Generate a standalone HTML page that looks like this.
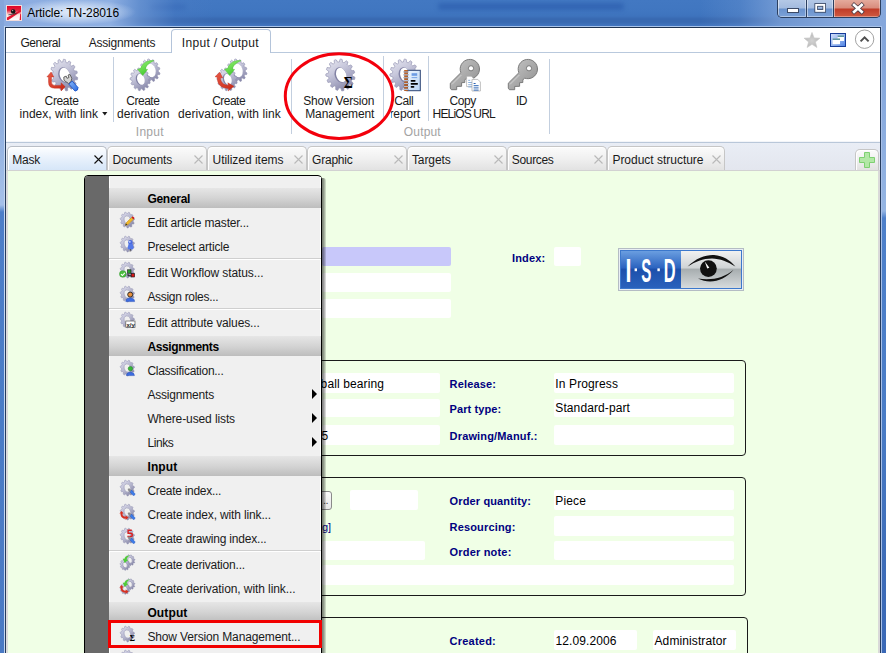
<!DOCTYPE html>
<html lang="en"><head><meta charset="utf-8"><title>Article: TN-28016</title>
<style>
html,body{margin:0;padding:0}
body{width:886px;height:653px;position:relative;overflow:hidden;background:#4a7cc4;font-family:"Liberation Sans",sans-serif;font-size:12px}
body *{position:absolute;box-sizing:border-box}
.t{white-space:nowrap;line-height:14px;height:14px}
.ic{overflow:visible}
#titlebar{left:0;top:0;width:886px;height:28px;background:linear-gradient(180deg,#4278c2 0,#4076c0 12px,#3e73bd 16px,#3869b1 19px,#3869b1 22px,#3c6fb8 24px,#4276c0 26px,#a9c4ea 26px,#a9c4ea 27px,#1f3350 27px)}
.blob{background:rgba(38,88,170,.55);filter:blur(2px);border-radius:3px}
#glow{left:0;top:0;width:260px;height:26px;background:radial-gradient(ellipse 62px 13px at 74px 12px,rgba(236,242,252,.9) 0,rgba(220,232,248,.7) 45%,rgba(190,210,240,0) 100%),linear-gradient(90deg,rgba(140,172,224,1) 0,rgba(146,178,228,.95) 110px,rgba(120,158,216,.6) 140px,rgba(80,125,198,.25) 175px,rgba(64,118,192,0) 215px)}
#glow2{left:700px;top:0;width:186px;height:26px;background:linear-gradient(90deg,rgba(134,168,220,0) 0,rgba(134,168,220,.2) 40px,rgba(134,168,220,.7) 80px,rgba(134,168,220,1) 150px)}
#lb{left:0;top:0;width:4px;height:653px;background:linear-gradient(180deg,#86a6da 0,#7ea2d8 60px,#a4bfe8 198px,#a4bfe8 205px,#4c7ec8 212px,#4a7ac4 100%)}
#lb1{left:4px;top:26px;width:1px;height:627px;background:#c4d6f0}
#lb2{left:5px;top:27px;width:1px;height:626px;background:#263c5e}
#rb{left:882px;top:0;width:4px;height:653px;background:linear-gradient(180deg,#86a8dc 0,#84a6dc 60px,#94b4e2 205px,#94b4e2 211px,#4e80ca 218px,#4a7cc6 420px,#3d6cb8 560px,#3a68b6 100%)}
#rb1{left:881px;top:26px;width:1px;height:627px;background:#a8c0e8}
#rb2{left:880px;top:27px;width:1px;height:626px;background:#263c5e}
#client{left:6px;top:28px;width:874px;height:625px;background:#fff}
.tabline{left:6px;top:52px;width:873px;height:1px;background:#b9c9dd}
#acttab{left:171px;top:29px;width:100px;height:24px;border:1px solid #b4c4da;border-bottom:0;border-radius:4px 4px 0 0;background:#fff}
.vs{width:1px;background:#c3cfdf}
#ribline{left:6px;top:141px;width:874px;height:2px;background:linear-gradient(180deg,#f3f5f9 0,#f3f5f9 1px,#b9c7d9 1px)}
#strip{left:6px;top:143px;width:874px;height:28px;background:linear-gradient(180deg,#e9edf5,#e3e6ee)}
#stripline{left:6px;top:170px;width:874px;height:1px;background:#d2d2d2}
.dt{top:146px;height:24px;border:1px solid #c6c6c6;border-bottom:0;border-radius:5px 5px 0 0;background:linear-gradient(180deg,#fbfbfb 0,#f0f0f0 50%,#e2e2e2 100%);box-shadow:inset 1px 1px 0 #fff}
.dt.a{background:linear-gradient(180deg,#fdfeff 0,#eaf2fc 45%,#d6e6f8 100%);border-color:#b9bec6}
#content{left:8px;top:171px;width:870px;height:482px;background:#f0ffe6}
#cedge{left:878px;top:171px;width:2px;height:482px;background:#d9d9d9}
#cedge2{left:6px;top:171px;width:2px;height:482px;background:#dcdcdc}
.f{background:#fff;border-radius:2px}
.gb{border:1px solid #1a1a1a;border-radius:4px}
#menu{left:84px;top:175px;width:238px;height:500px;border:1px solid #000;border-radius:4px;background:#f0f0f0}
#mshadow{left:322px;top:178px;width:4px;height:480px;background:linear-gradient(90deg,rgba(0,0,0,.5) 0,rgba(0,0,0,.45) 1px,rgba(0,0,0,.36) 2px,rgba(0,0,0,.22) 3px,rgba(0,0,0,.1) 4px);border-radius:0 3px 0 0}
#mstrip{left:85px;top:176px;width:24px;height:480px;background:#696969;border-radius:3px 0 0 0}
#mwl{left:109px;top:177px;width:1px;height:480px;background:#fff}
#mwr{left:320px;top:177px;width:1px;height:480px;background:#fff}
.mh{left:109px;width:212px;height:20px;background:linear-gradient(180deg,#e6e6e6 0,#d4d4d4 50%,#bdbdbd 100%)}
.ms{left:109px;width:212px;height:2px;background:linear-gradient(180deg,#cfcfcf 0,#cfcfcf 1px,#fff 1px)}
.ma{left:312px;width:0;height:0;border-left:5.4px solid #000;border-top:5px solid transparent;border-bottom:5px solid transparent}
#redrect{left:108px;top:620px;width:214px;height:28px;border:3px solid #f10000}

</style></head>
<body>
<svg width="0" height="0" style="position:absolute"><defs>
<linearGradient id="gg" x1="0.3" y1="0" x2="0.5" y2="1"><stop offset="0" stop-color="#e0e0ec"/><stop offset="0.35" stop-color="#c8c8dc"/><stop offset="0.7" stop-color="#a6a6c2"/><stop offset="1" stop-color="#8686a8"/></linearGradient>
<linearGradient id="gs" x1="0.2" y1="0" x2="0.7" y2="1"><stop offset="0" stop-color="#dcdcec"/><stop offset="0.5" stop-color="#b8b8d0"/><stop offset="1" stop-color="#8484a4"/></linearGradient>
<linearGradient id="rd" x1="0" y1="0" x2="1" y2="1"><stop offset="0" stop-color="#e85a48"/><stop offset="1" stop-color="#c82814"/></linearGradient>
<linearGradient id="gr" x1="0" y1="0" x2="0.6" y2="1"><stop offset="0" stop-color="#9af07a"/><stop offset="1" stop-color="#3cc828"/></linearGradient>
<linearGradient id="ky" x1="0" y1="0" x2="1" y2="1"><stop offset="0" stop-color="#c8c8c8"/><stop offset="1" stop-color="#8e8e8e"/></linearGradient>
<linearGradient id="bl" x1="0" y1="0" x2="1" y2="1"><stop offset="0" stop-color="#8ab8f8"/><stop offset="1" stop-color="#2a6ae0"/></linearGradient>
<linearGradient id="pg" x1="0" y1="0" x2="1" y2="1"><stop offset="0" stop-color="#eef6ff"/><stop offset="1" stop-color="#b8d4f4"/></linearGradient>
</defs></svg>
<div id="titlebar"></div>
<div class="blob" style="left:438px;top:3px;width:186px;height:7px"></div><div class="blob" style="left:150px;top:4px;width:36px;height:6px;opacity:.6"></div>
<div id="glow"></div><div id="glow2"></div>
<div id="lb"></div><div id="lb1"></div><div id="lb2"></div>
<div id="rb"></div><div id="rb1"></div><div id="rb2"></div>
<!-- app icon -->
<svg class="ic" style="left:6px;top:5px" width="16" height="16" viewBox="0 0 16 16"><defs><linearGradient id="aig" x1="0" y1="0" x2="0" y2="1"><stop offset="0" stop-color="#e00428"/><stop offset="0.3" stop-color="#e41c38"/><stop offset="0.62" stop-color="#fbe4e0"/><stop offset="1" stop-color="#fff"/></linearGradient></defs>
<rect x="0" y="0" width="16" height="16" fill="#f2dcdc"/><rect x="1" y="1" width="14" height="14" fill="url(#aig)"/>
<path d="M1,15 L1,12.6 L13.6,5.6 L15,5.2 L15,6.4 L2.4,15Z" fill="#e4142e"/><path d="M14.2,9 L15,8.4 L15,15 L13.6,15Z" fill="#e4142e"/>
<path d="M2.4,9.8 Q6,9.6 10.6,8.4" stroke="#333" stroke-width="0.8" fill="none"/>
<circle cx="7.2" cy="6.5" r="2.3" fill="#161616"/><circle cx="6.7" cy="5.6" r="0.55" fill="#ddd"/></svg>
<!-- window buttons -->
<div id="wbtn" style="left:777px;top:0;width:104px;height:18px;border:1px solid #2b3f60;border-top:0;border-radius:0 0 5px 5px;overflow:hidden;background:#2b3f60">
 <div style="left:0;top:0;width:28px;height:17px;background:linear-gradient(180deg,#b4c8e6 0,#a3bbdf 8px,#6a92cc 9px,#7ca2d8 17px);box-shadow:inset 1px 0 0 rgba(255,255,255,.5),inset -1px -1px 0 rgba(255,255,255,.4)"></div>
 <div style="left:29px;top:0;width:26px;height:17px;background:linear-gradient(180deg,#b4c8e6 0,#a3bbdf 8px,#6a92cc 9px,#7ca2d8 17px);box-shadow:inset 1px 0 0 rgba(255,255,255,.5),inset -1px -1px 0 rgba(255,255,255,.4)"></div>
 <div style="left:56px;top:0;width:46px;height:17px;background:linear-gradient(180deg,#e4aa9c 0,#d88c7c 8px,#c03c28 9px,#d05a40 17px);box-shadow:inset 1px 0 0 rgba(255,255,255,.45),inset -1px -1px 0 rgba(255,255,255,.35)"></div>
</div>
<svg class="ic" style="left:777px;top:0" width="104" height="18" viewBox="0 0 104 18">
 <rect x="10.5" y="8.5" width="11" height="4" fill="#fff" stroke="#3c4a66" stroke-width="1"/>
 <rect x="39.2" y="4.9" width="8" height="6" fill="none" stroke="#3c4a66" stroke-width="3.6"/><rect x="39.2" y="4.9" width="8" height="6" fill="none" stroke="#fff" stroke-width="1.9"/>
 <path d="M77.1,5 L84.7,11.8 M84.7,5 L77.1,11.8" stroke="#4a3a44" stroke-width="4.3" stroke-linecap="square"/><path d="M77.1,5 L84.7,11.8 M84.7,5 L77.1,11.8" stroke="#fff" stroke-width="2.7" stroke-linecap="square"/>
</svg>
<div id="client"></div>
<div id="acttab"></div>
<div class="tabline" style="width:165px"></div>
<div class="tabline" style="left:271px;width:609px"></div>
<!-- top-right ribbon icons -->
<svg class="ic" style="left:803px;top:31px" width="18" height="18" viewBox="0 0 18 18"><defs><radialGradient id="stg" cx="0.5" cy="0.55" r="0.6"><stop offset="0" stop-color="#d2d2d2"/><stop offset="1" stop-color="#b4b4b4"/></radialGradient></defs><path d="M9,1.4 L11.1,6.9 L16.9,7.2 L12.4,10.9 L13.9,16.5 L9,13.3 L4.1,16.5 L5.6,10.9 L1.1,7.2 L6.9,6.9 Z" fill="url(#stg)" stroke="#c6c6c6" stroke-width="0.6" stroke-linejoin="round"/></svg>
<svg class="ic" style="left:830px;top:33px" width="16" height="14" viewBox="0 0 16 14"><defs><linearGradient id="wg" x1="0" y1="0" x2="1" y2="1"><stop offset="0" stop-color="#d4e0fa"/><stop offset="0.5" stop-color="#9ab8f0"/><stop offset="1" stop-color="#4a80e4"/></linearGradient></defs><rect x="0.5" y="0.5" width="15" height="13" fill="url(#wg)" stroke="#163c98" stroke-width="1"/><rect x="7.6" y="2.6" width="6.4" height="5.4" fill="#fff"/><rect x="7.6" y="2.6" width="6.4" height="1.1" fill="#1c6c78"/><rect x="2.6" y="5.6" width="7.4" height="5.6" fill="#fff"/><rect x="2.6" y="5.6" width="7.4" height="1.1" fill="#1c6c78"/></svg>
<svg class="ic" style="left:854px;top:29px" width="21" height="21" viewBox="0 0 21 21"><circle cx="10.6" cy="10.2" r="9.2" fill="#fff" stroke="#8a8a8a" stroke-width="0.8"/><path d="M6.6,12.4 L10.6,8.4 L14.6,12.4" stroke="#4e4e4e" stroke-width="2" fill="none"/></svg>
<!-- ribbon separators -->
<div class="vs" style="left:113px;top:57px;height:65px"></div>
<div class="vs" style="left:291px;top:59px;height:75px"></div>
<div class="vs" style="left:383px;top:56px;height:65px"></div>
<div class="vs" style="left:428px;top:56px;height:65px"></div>
<div class="vs" style="left:549px;top:59px;height:75px"></div>
<svg class="ic" style="left:46px;top:59px" width="34" height="34" viewBox="0 0 34 34"><g transform="translate(18.1,16) rotate(-18) scale(0.83,1.0)"><path d="M15.8,0.0 L16.0,0.5 L16.0,0.9 L15.9,1.4 L15.9,1.8 L15.8,2.3 L14.9,2.6 L13.5,2.7 L12.9,3.0 L12.8,3.4 L12.7,3.7 L12.6,4.1 L12.4,4.4 L12.7,5.0 L13.8,5.8 L14.6,6.6 L14.4,7.1 L14.2,7.5 L13.9,7.9 L13.7,8.3 L13.4,8.6 L12.1,8.3 L10.8,7.9 L10.5,8.1 L10.2,8.4 L10.0,8.6 L9.7,8.9 L9.5,9.2 L9.8,10.1 L10.4,11.3 L10.5,12.1 L10.1,12.4 L9.8,12.7 L9.4,12.9 L9.0,13.2 L8.4,13.1 L7.4,12.2 L6.5,11.5 L6.2,11.7 L5.8,11.8 L5.5,12.0 L5.1,12.2 L4.8,12.3 L4.9,13.7 L4.9,15.0 L4.5,15.4 L4.1,15.5 L3.6,15.6 L3.2,15.7 L2.7,15.8 L2.2,15.0 L1.6,13.7 L1.1,13.2 L0.8,13.2 L0.4,13.2 L0.0,13.2 L-0.4,13.2 L-0.8,13.6 L-1.3,14.9 L-1.8,15.9 L-2.3,15.8 L-2.7,15.8 L-3.2,15.7 L-3.6,15.6 L-4.1,15.4 L-4.1,14.1 L-4.1,12.7 L-4.4,12.4 L-4.8,12.3 L-5.1,12.2 L-5.5,12.0 L-5.8,11.8 L-6.6,12.4 L-7.6,13.4 L-8.3,13.7 L-8.7,13.5 L-9.0,13.2 L-9.4,12.9 L-9.8,12.7 L-9.8,12.0 L-9.3,10.8 L-8.9,9.7 L-9.2,9.5 L-9.5,9.2 L-9.7,8.9 L-10.0,8.6 L-10.3,8.4 L-11.5,8.9 L-12.8,9.3 L-13.2,9.0 L-13.5,8.7 L-13.7,8.3 L-13.9,7.9 L-14.2,7.5 L-13.6,6.7 L-12.6,5.7 L-12.2,5.1 L-12.3,4.8 L-12.4,4.4 L-12.6,4.1 L-12.7,3.7 L-13.2,3.5 L-14.6,3.4 L-15.7,3.2 L-15.8,2.7 L-15.8,2.3 L-15.9,1.8 L-15.9,1.4 L-15.9,0.9 L-14.7,0.4 L-13.4,0.0 L-13.2,-0.4 L-13.2,-0.8 L-13.2,-1.1 L-13.1,-1.5 L-13.1,-1.9 L-13.9,-2.4 L-15.1,-3.1 L-15.6,-3.6 L-15.5,-4.1 L-15.4,-4.5 L-15.2,-4.9 L-15.1,-5.4 L-14.5,-5.6 L-13.1,-5.5 L-12.0,-5.5 L-11.8,-5.8 L-11.7,-6.2 L-11.5,-6.5 L-11.3,-6.8 L-11.1,-7.2 L-12.0,-8.2 L-12.8,-9.3 L-12.7,-9.8 L-12.4,-10.1 L-12.1,-10.5 L-11.8,-10.8 L-11.5,-11.2 L-10.5,-10.8 L-9.3,-10.2 L-8.6,-10.0 L-8.4,-10.2 L-8.1,-10.5 L-7.8,-10.7 L-7.5,-10.9 L-7.4,-11.5 L-7.7,-12.8 L-7.9,-13.9 L-7.5,-14.2 L-7.1,-14.4 L-6.6,-14.6 L-6.2,-14.7 L-5.8,-14.9 L-4.9,-13.8 L-4.1,-12.7 L-3.7,-12.7 L-3.4,-12.8 L-3.0,-12.9 L-2.6,-12.9 L-2.3,-13.0 L-2.0,-13.9 L-1.8,-15.3 L-1.4,-15.9 L-0.9,-16.0 L-0.5,-16.0 L-0.0,-16.0 L0.5,-16.0 L0.9,-15.5 L1.2,-14.2 L1.5,-13.1 L1.9,-13.1 L2.3,-13.0 L2.6,-12.9 L3.0,-12.9 L3.4,-12.8 L4.1,-13.9 L4.9,-15.0 L5.4,-15.1 L5.8,-14.9 L6.2,-14.7 L6.6,-14.6 L7.1,-14.4 L7.1,-13.4 L6.8,-12.0 L6.8,-11.3 L7.1,-11.1 L7.5,-10.9 L7.8,-10.7 L8.1,-10.5 L8.6,-10.6 L9.8,-11.3 L10.8,-11.8 L11.2,-11.5 L11.5,-11.2 L11.8,-10.8 L12.1,-10.5 L12.4,-10.1 L11.6,-9.0 L10.8,-7.9 L10.9,-7.5 L11.1,-7.1 L11.3,-6.8 L11.5,-6.5 L11.7,-6.2 L12.6,-6.2 L14.0,-6.4 L14.7,-6.2 L14.9,-5.8 L15.1,-5.4 L15.2,-4.9 L15.4,-4.5 L15.0,-4.0 L13.9,-3.2 L12.9,-2.6 L13.0,-2.3 L13.1,-1.9 L13.1,-1.5 L13.2,-1.1 L13.2,-0.8 L14.5,-0.4Z" fill="url(#gg)" stroke="#9494b2" stroke-width="0.7"/><ellipse cx="0" cy="0" rx="6.87" ry="7.8" fill="#8282a4"/><ellipse cx="0.9" cy="0.2" rx="6.07" ry="7.3" fill="#fff"/></g><path d="M5.1,13 L0.9,17.9 L2.5,17.9 L2.5,23 Q2.5,29.2 8.6,29.2 L15.1,29.2 L15.1,32 L19.2,27.7 L15.1,23.8 L15.1,26.4 L9,26.4 Q5.5,26.4 5.5,23 L5.5,17.9 L7.8,17.9 Z" fill="url(#rd)" stroke="#c0281a" stroke-width="0.4"/><g transform="translate(0.4,0.9)"><path d="M17.6,20.5 L17.4,17.2 L19.8,16.2 L20.6,18.4 L22.6,17.6 L21.6,15.2 L23.6,14.6 L25.4,18.4 L24.6,21.6 L22.2,23.6 Z" fill="#d4d4d4" stroke="#555" stroke-width="0.9"/><path d="M22.4,24.2 L25.8,21.2 L31.6,27.6 Q32,30.8 28.6,31.2 Z" fill="url(#bl)" stroke="#1c56c8" stroke-width="0.9"/></g></svg><svg class="ic" style="left:129px;top:58px" width="34" height="34" viewBox="0 0 34 34"><g transform="translate(21,12.4) rotate(-18) scale(0.86,1)"><path d="M11.2,0.0 L11.5,0.5 L11.5,0.9 L11.4,1.4 L11.4,1.8 L10.6,2.1 L9.7,2.3 L9.1,2.6 L9.0,2.9 L8.9,3.3 L8.8,3.6 L9.1,4.2 L9.7,5.0 L10.0,5.6 L9.8,6.0 L9.6,6.4 L9.3,6.8 L8.7,6.9 L7.8,6.6 L7.0,6.4 L6.7,6.7 L6.4,7.0 L6.2,7.2 L6.0,7.7 L6.3,8.6 L6.4,9.6 L6.0,9.8 L5.6,10.0 L5.2,10.2 L4.8,10.3 L4.0,9.7 L3.3,9.0 L2.9,9.0 L2.6,9.1 L2.2,9.2 L1.9,9.3 L1.6,10.2 L1.3,11.2 L0.9,11.5 L0.5,11.5 L0.0,11.5 L-0.5,11.5 L-0.8,10.7 L-1.2,9.8 L-1.5,9.4 L-1.9,9.3 L-2.2,9.2 L-2.6,9.1 L-3.1,9.6 L-3.8,10.3 L-4.4,10.6 L-4.8,10.4 L-5.2,10.2 L-5.6,10.0 L-5.8,9.4 L-5.6,8.4 L-5.6,7.7 L-5.9,7.5 L-6.2,7.2 L-6.4,7.0 L-6.9,6.9 L-7.9,7.3 L-8.7,7.5 L-9.0,7.1 L-9.3,6.8 L-9.6,6.4 L-9.6,5.9 L-9.1,5.1 L-8.5,4.3 L-8.6,4.0 L-8.8,3.6 L-8.9,3.3 L-9.1,3.0 L-10.1,2.8 L-11.0,2.6 L-11.3,2.2 L-11.4,1.8 L-11.4,1.4 L-11.5,0.9 L-10.7,0.4 L-9.8,0.0 L-9.5,-0.4 L-9.5,-0.7 L-9.4,-1.1 L-9.4,-1.5 L-10.0,-2.0 L-10.8,-2.6 L-11.1,-3.1 L-10.9,-3.6 L-10.8,-4.0 L-10.6,-4.4 L-10.0,-4.6 L-9.0,-4.6 L-8.3,-4.6 L-8.1,-5.0 L-7.9,-5.3 L-7.7,-5.6 L-7.8,-6.1 L-8.2,-7.0 L-8.4,-7.8 L-8.1,-8.1 L-7.8,-8.4 L-7.5,-8.7 L-7.0,-8.8 L-6.1,-8.4 L-5.3,-7.9 L-5.0,-8.1 L-4.6,-8.3 L-4.3,-8.5 L-4.0,-8.7 L-4.0,-9.7 L-3.9,-10.7 L-3.6,-10.9 L-3.1,-11.1 L-2.7,-11.2 L-2.2,-11.3 L-1.7,-10.5 L-1.1,-9.7 L-0.7,-9.5 L-0.4,-9.5 L-0.0,-9.5 L0.4,-9.5 L0.8,-10.2 L1.3,-11.1 L1.8,-11.4 L2.2,-11.3 L2.7,-11.2 L3.1,-11.1 L3.4,-10.4 L3.5,-9.4 L3.6,-8.8 L4.0,-8.6 L4.3,-8.5 L4.6,-8.3 L5.2,-8.5 L6.0,-9.0 L6.8,-9.3 L7.1,-9.0 L7.5,-8.7 L7.8,-8.4 L7.9,-7.9 L7.5,-7.0 L7.2,-6.2 L7.5,-5.9 L7.7,-5.6 L7.9,-5.3 L8.3,-5.1 L9.2,-5.2 L10.2,-5.2 L10.4,-4.8 L10.6,-4.4 L10.8,-4.0 L10.9,-3.5 L10.2,-2.9 L9.4,-2.3 L9.3,-1.9 L9.4,-1.5 L9.4,-1.1 L9.5,-0.7 L10.3,-0.4Z" fill="url(#gg)" stroke="#9494b2" stroke-width="0.7"/><ellipse cx="0" cy="0" rx="6.4" ry="7.4" fill="#8282a4"/><ellipse cx="0.8" cy="0.2" rx="5.7" ry="7.0" fill="#fff"/></g><g transform="translate(11.2,21.4) rotate(-18) scale(0.86,1)"><path d="M11.2,0.0 L11.5,0.5 L11.5,0.9 L11.4,1.4 L11.4,1.8 L10.6,2.1 L9.7,2.3 L9.1,2.6 L9.0,2.9 L8.9,3.3 L8.8,3.6 L9.1,4.2 L9.7,5.0 L10.0,5.6 L9.8,6.0 L9.6,6.4 L9.3,6.8 L8.7,6.9 L7.8,6.6 L7.0,6.4 L6.7,6.7 L6.4,7.0 L6.2,7.2 L6.0,7.7 L6.3,8.6 L6.4,9.6 L6.0,9.8 L5.6,10.0 L5.2,10.2 L4.8,10.3 L4.0,9.7 L3.3,9.0 L2.9,9.0 L2.6,9.1 L2.2,9.2 L1.9,9.3 L1.6,10.2 L1.3,11.2 L0.9,11.5 L0.5,11.5 L0.0,11.5 L-0.5,11.5 L-0.8,10.7 L-1.2,9.8 L-1.5,9.4 L-1.9,9.3 L-2.2,9.2 L-2.6,9.1 L-3.1,9.6 L-3.8,10.3 L-4.4,10.6 L-4.8,10.4 L-5.2,10.2 L-5.6,10.0 L-5.8,9.4 L-5.6,8.4 L-5.6,7.7 L-5.9,7.5 L-6.2,7.2 L-6.4,7.0 L-6.9,6.9 L-7.9,7.3 L-8.7,7.5 L-9.0,7.1 L-9.3,6.8 L-9.6,6.4 L-9.6,5.9 L-9.1,5.1 L-8.5,4.3 L-8.6,4.0 L-8.8,3.6 L-8.9,3.3 L-9.1,3.0 L-10.1,2.8 L-11.0,2.6 L-11.3,2.2 L-11.4,1.8 L-11.4,1.4 L-11.5,0.9 L-10.7,0.4 L-9.8,0.0 L-9.5,-0.4 L-9.5,-0.7 L-9.4,-1.1 L-9.4,-1.5 L-10.0,-2.0 L-10.8,-2.6 L-11.1,-3.1 L-10.9,-3.6 L-10.8,-4.0 L-10.6,-4.4 L-10.0,-4.6 L-9.0,-4.6 L-8.3,-4.6 L-8.1,-5.0 L-7.9,-5.3 L-7.7,-5.6 L-7.8,-6.1 L-8.2,-7.0 L-8.4,-7.8 L-8.1,-8.1 L-7.8,-8.4 L-7.5,-8.7 L-7.0,-8.8 L-6.1,-8.4 L-5.3,-7.9 L-5.0,-8.1 L-4.6,-8.3 L-4.3,-8.5 L-4.0,-8.7 L-4.0,-9.7 L-3.9,-10.7 L-3.6,-10.9 L-3.1,-11.1 L-2.7,-11.2 L-2.2,-11.3 L-1.7,-10.5 L-1.1,-9.7 L-0.7,-9.5 L-0.4,-9.5 L-0.0,-9.5 L0.4,-9.5 L0.8,-10.2 L1.3,-11.1 L1.8,-11.4 L2.2,-11.3 L2.7,-11.2 L3.1,-11.1 L3.4,-10.4 L3.5,-9.4 L3.6,-8.8 L4.0,-8.6 L4.3,-8.5 L4.6,-8.3 L5.2,-8.5 L6.0,-9.0 L6.8,-9.3 L7.1,-9.0 L7.5,-8.7 L7.8,-8.4 L7.9,-7.9 L7.5,-7.0 L7.2,-6.2 L7.5,-5.9 L7.7,-5.6 L7.9,-5.3 L8.3,-5.1 L9.2,-5.2 L10.2,-5.2 L10.4,-4.8 L10.6,-4.4 L10.8,-4.0 L10.9,-3.5 L10.2,-2.9 L9.4,-2.3 L9.3,-1.9 L9.4,-1.5 L9.4,-1.1 L9.5,-0.7 L10.3,-0.4Z" fill="url(#gg)" stroke="#9494b2" stroke-width="0.7"/><ellipse cx="0" cy="0" rx="5" ry="6" fill="#8282a4"/><ellipse cx="0.8" cy="0.2" rx="4.3" ry="5.6" fill="#fff"/></g><path d="M25,2.7 C20,1.9 13.6,4 11.6,10.6 L8.6,11.3 L13.7,17.6 L18.6,11.4 L16.4,11 C17,8 20,4.6 25,2.7 Z" fill="url(#gr)" stroke="#48c030" stroke-width="0.4"/></svg><svg class="ic" style="left:216px;top:58px" width="34" height="34" viewBox="0 0 34 34"><g transform="translate(21,12.4) rotate(-18) scale(0.86,1)"><path d="M11.2,0.0 L11.5,0.5 L11.5,0.9 L11.4,1.4 L11.4,1.8 L10.6,2.1 L9.7,2.3 L9.1,2.6 L9.0,2.9 L8.9,3.3 L8.8,3.6 L9.1,4.2 L9.7,5.0 L10.0,5.6 L9.8,6.0 L9.6,6.4 L9.3,6.8 L8.7,6.9 L7.8,6.6 L7.0,6.4 L6.7,6.7 L6.4,7.0 L6.2,7.2 L6.0,7.7 L6.3,8.6 L6.4,9.6 L6.0,9.8 L5.6,10.0 L5.2,10.2 L4.8,10.3 L4.0,9.7 L3.3,9.0 L2.9,9.0 L2.6,9.1 L2.2,9.2 L1.9,9.3 L1.6,10.2 L1.3,11.2 L0.9,11.5 L0.5,11.5 L0.0,11.5 L-0.5,11.5 L-0.8,10.7 L-1.2,9.8 L-1.5,9.4 L-1.9,9.3 L-2.2,9.2 L-2.6,9.1 L-3.1,9.6 L-3.8,10.3 L-4.4,10.6 L-4.8,10.4 L-5.2,10.2 L-5.6,10.0 L-5.8,9.4 L-5.6,8.4 L-5.6,7.7 L-5.9,7.5 L-6.2,7.2 L-6.4,7.0 L-6.9,6.9 L-7.9,7.3 L-8.7,7.5 L-9.0,7.1 L-9.3,6.8 L-9.6,6.4 L-9.6,5.9 L-9.1,5.1 L-8.5,4.3 L-8.6,4.0 L-8.8,3.6 L-8.9,3.3 L-9.1,3.0 L-10.1,2.8 L-11.0,2.6 L-11.3,2.2 L-11.4,1.8 L-11.4,1.4 L-11.5,0.9 L-10.7,0.4 L-9.8,0.0 L-9.5,-0.4 L-9.5,-0.7 L-9.4,-1.1 L-9.4,-1.5 L-10.0,-2.0 L-10.8,-2.6 L-11.1,-3.1 L-10.9,-3.6 L-10.8,-4.0 L-10.6,-4.4 L-10.0,-4.6 L-9.0,-4.6 L-8.3,-4.6 L-8.1,-5.0 L-7.9,-5.3 L-7.7,-5.6 L-7.8,-6.1 L-8.2,-7.0 L-8.4,-7.8 L-8.1,-8.1 L-7.8,-8.4 L-7.5,-8.7 L-7.0,-8.8 L-6.1,-8.4 L-5.3,-7.9 L-5.0,-8.1 L-4.6,-8.3 L-4.3,-8.5 L-4.0,-8.7 L-4.0,-9.7 L-3.9,-10.7 L-3.6,-10.9 L-3.1,-11.1 L-2.7,-11.2 L-2.2,-11.3 L-1.7,-10.5 L-1.1,-9.7 L-0.7,-9.5 L-0.4,-9.5 L-0.0,-9.5 L0.4,-9.5 L0.8,-10.2 L1.3,-11.1 L1.8,-11.4 L2.2,-11.3 L2.7,-11.2 L3.1,-11.1 L3.4,-10.4 L3.5,-9.4 L3.6,-8.8 L4.0,-8.6 L4.3,-8.5 L4.6,-8.3 L5.2,-8.5 L6.0,-9.0 L6.8,-9.3 L7.1,-9.0 L7.5,-8.7 L7.8,-8.4 L7.9,-7.9 L7.5,-7.0 L7.2,-6.2 L7.5,-5.9 L7.7,-5.6 L7.9,-5.3 L8.3,-5.1 L9.2,-5.2 L10.2,-5.2 L10.4,-4.8 L10.6,-4.4 L10.8,-4.0 L10.9,-3.5 L10.2,-2.9 L9.4,-2.3 L9.3,-1.9 L9.4,-1.5 L9.4,-1.1 L9.5,-0.7 L10.3,-0.4Z" fill="url(#gg)" stroke="#9494b2" stroke-width="0.7"/><ellipse cx="0" cy="0" rx="6.4" ry="7.4" fill="#8282a4"/><ellipse cx="0.8" cy="0.2" rx="5.7" ry="7.0" fill="#fff"/></g><g transform="translate(11.2,21.4) rotate(-18) scale(0.86,1)"><path d="M11.2,0.0 L11.5,0.5 L11.5,0.9 L11.4,1.4 L11.4,1.8 L10.6,2.1 L9.7,2.3 L9.1,2.6 L9.0,2.9 L8.9,3.3 L8.8,3.6 L9.1,4.2 L9.7,5.0 L10.0,5.6 L9.8,6.0 L9.6,6.4 L9.3,6.8 L8.7,6.9 L7.8,6.6 L7.0,6.4 L6.7,6.7 L6.4,7.0 L6.2,7.2 L6.0,7.7 L6.3,8.6 L6.4,9.6 L6.0,9.8 L5.6,10.0 L5.2,10.2 L4.8,10.3 L4.0,9.7 L3.3,9.0 L2.9,9.0 L2.6,9.1 L2.2,9.2 L1.9,9.3 L1.6,10.2 L1.3,11.2 L0.9,11.5 L0.5,11.5 L0.0,11.5 L-0.5,11.5 L-0.8,10.7 L-1.2,9.8 L-1.5,9.4 L-1.9,9.3 L-2.2,9.2 L-2.6,9.1 L-3.1,9.6 L-3.8,10.3 L-4.4,10.6 L-4.8,10.4 L-5.2,10.2 L-5.6,10.0 L-5.8,9.4 L-5.6,8.4 L-5.6,7.7 L-5.9,7.5 L-6.2,7.2 L-6.4,7.0 L-6.9,6.9 L-7.9,7.3 L-8.7,7.5 L-9.0,7.1 L-9.3,6.8 L-9.6,6.4 L-9.6,5.9 L-9.1,5.1 L-8.5,4.3 L-8.6,4.0 L-8.8,3.6 L-8.9,3.3 L-9.1,3.0 L-10.1,2.8 L-11.0,2.6 L-11.3,2.2 L-11.4,1.8 L-11.4,1.4 L-11.5,0.9 L-10.7,0.4 L-9.8,0.0 L-9.5,-0.4 L-9.5,-0.7 L-9.4,-1.1 L-9.4,-1.5 L-10.0,-2.0 L-10.8,-2.6 L-11.1,-3.1 L-10.9,-3.6 L-10.8,-4.0 L-10.6,-4.4 L-10.0,-4.6 L-9.0,-4.6 L-8.3,-4.6 L-8.1,-5.0 L-7.9,-5.3 L-7.7,-5.6 L-7.8,-6.1 L-8.2,-7.0 L-8.4,-7.8 L-8.1,-8.1 L-7.8,-8.4 L-7.5,-8.7 L-7.0,-8.8 L-6.1,-8.4 L-5.3,-7.9 L-5.0,-8.1 L-4.6,-8.3 L-4.3,-8.5 L-4.0,-8.7 L-4.0,-9.7 L-3.9,-10.7 L-3.6,-10.9 L-3.1,-11.1 L-2.7,-11.2 L-2.2,-11.3 L-1.7,-10.5 L-1.1,-9.7 L-0.7,-9.5 L-0.4,-9.5 L-0.0,-9.5 L0.4,-9.5 L0.8,-10.2 L1.3,-11.1 L1.8,-11.4 L2.2,-11.3 L2.7,-11.2 L3.1,-11.1 L3.4,-10.4 L3.5,-9.4 L3.6,-8.8 L4.0,-8.6 L4.3,-8.5 L4.6,-8.3 L5.2,-8.5 L6.0,-9.0 L6.8,-9.3 L7.1,-9.0 L7.5,-8.7 L7.8,-8.4 L7.9,-7.9 L7.5,-7.0 L7.2,-6.2 L7.5,-5.9 L7.7,-5.6 L7.9,-5.3 L8.3,-5.1 L9.2,-5.2 L10.2,-5.2 L10.4,-4.8 L10.6,-4.4 L10.8,-4.0 L10.9,-3.5 L10.2,-2.9 L9.4,-2.3 L9.3,-1.9 L9.4,-1.5 L9.4,-1.1 L9.5,-0.7 L10.3,-0.4Z" fill="url(#gg)" stroke="#9494b2" stroke-width="0.7"/><ellipse cx="0" cy="0" rx="5" ry="6" fill="#8282a4"/><ellipse cx="0.8" cy="0.2" rx="4.3" ry="5.6" fill="#fff"/></g><path d="M25,2.7 C20,1.9 13.6,4 11.6,10.6 L8.6,11.3 L13.7,17.6 L18.6,11.4 L16.4,11 C17,8 20,4.6 25,2.7 Z" fill="url(#gr)" stroke="#48c030" stroke-width="0.4"/><path d="M3.8,14.3 L-1,18.7 L1.2,19.2 C1.4,25 3,29.6 12.6,30.6 L12.2,33 L17.9,28.2 L11.8,24.8 L12.4,27.4 C7,27 4.8,24 4.4,19.8 L6.7,19.9 Z" fill="url(#rd)" stroke="#c0281a" stroke-width="0.4"/></svg><svg class="ic" style="left:325px;top:59px" width="32" height="33" viewBox="0 0 32 33"><g transform="translate(15.4,16) rotate(-18) scale(0.9,1.0)"><path d="M15.8,0.0 L16.0,0.5 L16.0,0.9 L15.9,1.4 L15.9,1.8 L15.8,2.3 L14.9,2.6 L13.5,2.7 L12.9,3.0 L12.8,3.4 L12.7,3.7 L12.6,4.1 L12.4,4.4 L12.7,5.0 L13.8,5.8 L14.6,6.6 L14.4,7.1 L14.2,7.5 L13.9,7.9 L13.7,8.3 L13.4,8.6 L12.1,8.3 L10.8,7.9 L10.5,8.1 L10.2,8.4 L10.0,8.6 L9.7,8.9 L9.5,9.2 L9.8,10.1 L10.4,11.3 L10.5,12.1 L10.1,12.4 L9.8,12.7 L9.4,12.9 L9.0,13.2 L8.4,13.1 L7.4,12.2 L6.5,11.5 L6.2,11.7 L5.8,11.8 L5.5,12.0 L5.1,12.2 L4.8,12.3 L4.9,13.7 L4.9,15.0 L4.5,15.4 L4.1,15.5 L3.6,15.6 L3.2,15.7 L2.7,15.8 L2.2,15.0 L1.6,13.7 L1.1,13.2 L0.8,13.2 L0.4,13.2 L0.0,13.2 L-0.4,13.2 L-0.8,13.6 L-1.3,14.9 L-1.8,15.9 L-2.3,15.8 L-2.7,15.8 L-3.2,15.7 L-3.6,15.6 L-4.1,15.4 L-4.1,14.1 L-4.1,12.7 L-4.4,12.4 L-4.8,12.3 L-5.1,12.2 L-5.5,12.0 L-5.8,11.8 L-6.6,12.4 L-7.6,13.4 L-8.3,13.7 L-8.7,13.5 L-9.0,13.2 L-9.4,12.9 L-9.8,12.7 L-9.8,12.0 L-9.3,10.8 L-8.9,9.7 L-9.2,9.5 L-9.5,9.2 L-9.7,8.9 L-10.0,8.6 L-10.3,8.4 L-11.5,8.9 L-12.8,9.3 L-13.2,9.0 L-13.5,8.7 L-13.7,8.3 L-13.9,7.9 L-14.2,7.5 L-13.6,6.7 L-12.6,5.7 L-12.2,5.1 L-12.3,4.8 L-12.4,4.4 L-12.6,4.1 L-12.7,3.7 L-13.2,3.5 L-14.6,3.4 L-15.7,3.2 L-15.8,2.7 L-15.8,2.3 L-15.9,1.8 L-15.9,1.4 L-15.9,0.9 L-14.7,0.4 L-13.4,0.0 L-13.2,-0.4 L-13.2,-0.8 L-13.2,-1.1 L-13.1,-1.5 L-13.1,-1.9 L-13.9,-2.4 L-15.1,-3.1 L-15.6,-3.6 L-15.5,-4.1 L-15.4,-4.5 L-15.2,-4.9 L-15.1,-5.4 L-14.5,-5.6 L-13.1,-5.5 L-12.0,-5.5 L-11.8,-5.8 L-11.7,-6.2 L-11.5,-6.5 L-11.3,-6.8 L-11.1,-7.2 L-12.0,-8.2 L-12.8,-9.3 L-12.7,-9.8 L-12.4,-10.1 L-12.1,-10.5 L-11.8,-10.8 L-11.5,-11.2 L-10.5,-10.8 L-9.3,-10.2 L-8.6,-10.0 L-8.4,-10.2 L-8.1,-10.5 L-7.8,-10.7 L-7.5,-10.9 L-7.4,-11.5 L-7.7,-12.8 L-7.9,-13.9 L-7.5,-14.2 L-7.1,-14.4 L-6.6,-14.6 L-6.2,-14.7 L-5.8,-14.9 L-4.9,-13.8 L-4.1,-12.7 L-3.7,-12.7 L-3.4,-12.8 L-3.0,-12.9 L-2.6,-12.9 L-2.3,-13.0 L-2.0,-13.9 L-1.8,-15.3 L-1.4,-15.9 L-0.9,-16.0 L-0.5,-16.0 L-0.0,-16.0 L0.5,-16.0 L0.9,-15.5 L1.2,-14.2 L1.5,-13.1 L1.9,-13.1 L2.3,-13.0 L2.6,-12.9 L3.0,-12.9 L3.4,-12.8 L4.1,-13.9 L4.9,-15.0 L5.4,-15.1 L5.8,-14.9 L6.2,-14.7 L6.6,-14.6 L7.1,-14.4 L7.1,-13.4 L6.8,-12.0 L6.8,-11.3 L7.1,-11.1 L7.5,-10.9 L7.8,-10.7 L8.1,-10.5 L8.6,-10.6 L9.8,-11.3 L10.8,-11.8 L11.2,-11.5 L11.5,-11.2 L11.8,-10.8 L12.1,-10.5 L12.4,-10.1 L11.6,-9.0 L10.8,-7.9 L10.9,-7.5 L11.1,-7.1 L11.3,-6.8 L11.5,-6.5 L11.7,-6.2 L12.6,-6.2 L14.0,-6.4 L14.7,-6.2 L14.9,-5.8 L15.1,-5.4 L15.2,-4.9 L15.4,-4.5 L15.0,-4.0 L13.9,-3.2 L12.9,-2.6 L13.0,-2.3 L13.1,-1.9 L13.1,-1.5 L13.2,-1.1 L13.2,-0.8 L14.5,-0.4Z" fill="url(#gg)" stroke="#9494b2" stroke-width="0.7"/><ellipse cx="0" cy="0" rx="6.33" ry="7.8" fill="#8282a4"/><ellipse cx="0.9" cy="0.2" rx="5.53" ry="7.3" fill="#fff"/></g><text transform="translate(18.8,29) scale(0.84,1)" font-family="Liberation Serif,serif" font-weight="bold" font-size="16.5" fill="#000">&#931;</text></svg><svg class="ic" style="left:391px;top:59px" width="32" height="33" viewBox="0 0 32 33"><g transform="translate(13.5,16) rotate(-18) scale(0.9,1.0)"><path d="M15.8,0.0 L16.0,0.5 L16.0,0.9 L15.9,1.4 L15.9,1.8 L15.8,2.3 L14.9,2.6 L13.5,2.7 L12.9,3.0 L12.8,3.4 L12.7,3.7 L12.6,4.1 L12.4,4.4 L12.7,5.0 L13.8,5.8 L14.6,6.6 L14.4,7.1 L14.2,7.5 L13.9,7.9 L13.7,8.3 L13.4,8.6 L12.1,8.3 L10.8,7.9 L10.5,8.1 L10.2,8.4 L10.0,8.6 L9.7,8.9 L9.5,9.2 L9.8,10.1 L10.4,11.3 L10.5,12.1 L10.1,12.4 L9.8,12.7 L9.4,12.9 L9.0,13.2 L8.4,13.1 L7.4,12.2 L6.5,11.5 L6.2,11.7 L5.8,11.8 L5.5,12.0 L5.1,12.2 L4.8,12.3 L4.9,13.7 L4.9,15.0 L4.5,15.4 L4.1,15.5 L3.6,15.6 L3.2,15.7 L2.7,15.8 L2.2,15.0 L1.6,13.7 L1.1,13.2 L0.8,13.2 L0.4,13.2 L0.0,13.2 L-0.4,13.2 L-0.8,13.6 L-1.3,14.9 L-1.8,15.9 L-2.3,15.8 L-2.7,15.8 L-3.2,15.7 L-3.6,15.6 L-4.1,15.4 L-4.1,14.1 L-4.1,12.7 L-4.4,12.4 L-4.8,12.3 L-5.1,12.2 L-5.5,12.0 L-5.8,11.8 L-6.6,12.4 L-7.6,13.4 L-8.3,13.7 L-8.7,13.5 L-9.0,13.2 L-9.4,12.9 L-9.8,12.7 L-9.8,12.0 L-9.3,10.8 L-8.9,9.7 L-9.2,9.5 L-9.5,9.2 L-9.7,8.9 L-10.0,8.6 L-10.3,8.4 L-11.5,8.9 L-12.8,9.3 L-13.2,9.0 L-13.5,8.7 L-13.7,8.3 L-13.9,7.9 L-14.2,7.5 L-13.6,6.7 L-12.6,5.7 L-12.2,5.1 L-12.3,4.8 L-12.4,4.4 L-12.6,4.1 L-12.7,3.7 L-13.2,3.5 L-14.6,3.4 L-15.7,3.2 L-15.8,2.7 L-15.8,2.3 L-15.9,1.8 L-15.9,1.4 L-15.9,0.9 L-14.7,0.4 L-13.4,0.0 L-13.2,-0.4 L-13.2,-0.8 L-13.2,-1.1 L-13.1,-1.5 L-13.1,-1.9 L-13.9,-2.4 L-15.1,-3.1 L-15.6,-3.6 L-15.5,-4.1 L-15.4,-4.5 L-15.2,-4.9 L-15.1,-5.4 L-14.5,-5.6 L-13.1,-5.5 L-12.0,-5.5 L-11.8,-5.8 L-11.7,-6.2 L-11.5,-6.5 L-11.3,-6.8 L-11.1,-7.2 L-12.0,-8.2 L-12.8,-9.3 L-12.7,-9.8 L-12.4,-10.1 L-12.1,-10.5 L-11.8,-10.8 L-11.5,-11.2 L-10.5,-10.8 L-9.3,-10.2 L-8.6,-10.0 L-8.4,-10.2 L-8.1,-10.5 L-7.8,-10.7 L-7.5,-10.9 L-7.4,-11.5 L-7.7,-12.8 L-7.9,-13.9 L-7.5,-14.2 L-7.1,-14.4 L-6.6,-14.6 L-6.2,-14.7 L-5.8,-14.9 L-4.9,-13.8 L-4.1,-12.7 L-3.7,-12.7 L-3.4,-12.8 L-3.0,-12.9 L-2.6,-12.9 L-2.3,-13.0 L-2.0,-13.9 L-1.8,-15.3 L-1.4,-15.9 L-0.9,-16.0 L-0.5,-16.0 L-0.0,-16.0 L0.5,-16.0 L0.9,-15.5 L1.2,-14.2 L1.5,-13.1 L1.9,-13.1 L2.3,-13.0 L2.6,-12.9 L3.0,-12.9 L3.4,-12.8 L4.1,-13.9 L4.9,-15.0 L5.4,-15.1 L5.8,-14.9 L6.2,-14.7 L6.6,-14.6 L7.1,-14.4 L7.1,-13.4 L6.8,-12.0 L6.8,-11.3 L7.1,-11.1 L7.5,-10.9 L7.8,-10.7 L8.1,-10.5 L8.6,-10.6 L9.8,-11.3 L10.8,-11.8 L11.2,-11.5 L11.5,-11.2 L11.8,-10.8 L12.1,-10.5 L12.4,-10.1 L11.6,-9.0 L10.8,-7.9 L10.9,-7.5 L11.1,-7.1 L11.3,-6.8 L11.5,-6.5 L11.7,-6.2 L12.6,-6.2 L14.0,-6.4 L14.7,-6.2 L14.9,-5.8 L15.1,-5.4 L15.2,-4.9 L15.4,-4.5 L15.0,-4.0 L13.9,-3.2 L12.9,-2.6 L13.0,-2.3 L13.1,-1.9 L13.1,-1.5 L13.2,-1.1 L13.2,-0.8 L14.5,-0.4Z" fill="url(#gg)" stroke="#9494b2" stroke-width="0.7"/><ellipse cx="0" cy="0" rx="6.33" ry="7.8" fill="#8282a4"/><ellipse cx="0.9" cy="0.2" rx="5.53" ry="7.3" fill="#fff"/></g><rect x="16.3" y="11.3" width="13" height="20.4" fill="url(#pg)" stroke="#2c4474" stroke-width="1"/><rect x="13.2" y="11" width="3.6" height="21" fill="#c8641e"/><rect x="12.6" y="12.4" width="4.8" height="1.1" rx="0.5" fill="#e6e6ee" stroke="#2c4474" stroke-width="0.3"/><rect x="12.6" y="15.3" width="4.8" height="1.1" rx="0.5" fill="#e6e6ee" stroke="#2c4474" stroke-width="0.3"/><rect x="12.6" y="18.2" width="4.8" height="1.1" rx="0.5" fill="#e6e6ee" stroke="#2c4474" stroke-width="0.3"/><rect x="12.6" y="21.1" width="4.8" height="1.1" rx="0.5" fill="#e6e6ee" stroke="#2c4474" stroke-width="0.3"/><rect x="12.6" y="24.0" width="4.8" height="1.1" rx="0.5" fill="#e6e6ee" stroke="#2c4474" stroke-width="0.3"/><rect x="12.6" y="26.9" width="4.8" height="1.1" rx="0.5" fill="#e6e6ee" stroke="#2c4474" stroke-width="0.3"/><rect x="12.6" y="29.8" width="4.8" height="1.1" rx="0.5" fill="#e6e6ee" stroke="#2c4474" stroke-width="0.3"/><rect x="20.6" y="14.2" width="5.6" height="2.6" fill="#6c9ce4"/><rect x="20.6" y="18.2" width="5.6" height="0.9" fill="#6c9ce4"/><rect x="19.6" y="21" width="5" height="1.7" rx="0.8" fill="#000"/><rect x="19.6" y="24" width="7.4" height="1.7" rx="0.8" fill="#000"/><rect x="19.6" y="27.1" width="3.8" height="1.7" rx="0.8" fill="#000"/></svg><svg class="ic" style="left:449px;top:59px" width="34" height="34" viewBox="0 0 34 34"><path d="M11.9,13.7 L1.3,24.2 L1.3,29.2 L2.4,30.7 L7.7,30.7 L7.7,27.4 L12.6,27.3 L12.6,23.7 L15.8,23.5 L15.8,21 L17.5,19.1 A9.65,9.65 0 1,0 11.9,13.7 Z M24.6,9.3 a2.6,2.6 0 1,0 -5.2,0 a2.6,2.6 0 1,0 5.2,0z" fill="url(#ky)" fill-rule="evenodd" stroke="#7a7a7a" stroke-width="1" stroke-linejoin="round"/><path d="M3,25.4 L12.4,16" stroke="#d8d8d8" stroke-width="1" fill="none" opacity="0.8"/><path d="M17.6,17.2 h4.800000000000001 l2.6,2.6 v7.800000000000001 h-7.4 z" fill="#fff" stroke="#a8a8a8" stroke-width="0.7"/><rect x="19.200000000000003" y="20.8" width="2" height="1" fill="#8ab0dc"/><rect x="19.200000000000003" y="23.0" width="4.0" height="1" fill="#8ab0dc"/><rect x="19.200000000000003" y="25.2" width="4.0" height="1" fill="#8ab0dc"/><rect x="19.200000000000003" y="27.4" width="4.0" height="1" fill="#8ab0dc"/><path d="M23,20.4 h5.800000000000001 l2.6,2.6 v9.0 h-8.4 z" fill="#fff" stroke="#a8a8a8" stroke-width="0.7"/><rect x="24.6" y="24.0" width="2" height="1" fill="#2c64b4"/><rect x="24.6" y="26.2" width="5.0" height="1" fill="#2c64b4"/><rect x="24.6" y="28.4" width="5.0" height="1" fill="#2c64b4"/><rect x="24.6" y="30.6" width="5.0" height="1" fill="#2c64b4"/></svg><svg class="ic" style="left:506.6px;top:59px" width="34" height="34" viewBox="0 0 34 34"><path d="M11.9,13.7 L1.3,24.2 L1.3,29.2 L2.4,30.7 L7.7,30.7 L7.7,27.4 L12.6,27.3 L12.6,23.7 L15.8,23.5 L15.8,21 L17.5,19.1 A9.65,9.65 0 1,0 11.9,13.7 Z M24.6,9.3 a2.6,2.6 0 1,0 -5.2,0 a2.6,2.6 0 1,0 5.2,0z" fill="url(#ky)" fill-rule="evenodd" stroke="#7a7a7a" stroke-width="1" stroke-linejoin="round"/><path d="M3,25.4 L12.4,16" stroke="#d8d8d8" stroke-width="1" fill="none" opacity="0.8"/></svg>
<!-- dropdown arrow -->
<svg class="ic" style="left:100px;top:110px" width="10" height="8" viewBox="100 110 10 8"><path d="M102.2,112.1 L107.4,112.1 L104.8,115.5Z" fill="#1a1a1a"/></svg>
<div id="ribline"></div>
<div id="strip"></div>
<div class="dt a" style="left:7px;width:100px"></div>
<div class="dt" style="left:107px;width:100px"></div>
<div class="dt" style="left:207px;width:100px"></div>
<div class="dt" style="left:307px;width:100px"></div>
<div class="dt" style="left:407px;width:100px"></div>
<div class="dt" style="left:507px;width:100px"></div>
<div class="dt" style="left:607px;width:118px"></div>
<div class="dt" style="left:855px;top:149px;width:24px;height:21px"></div>
<svg class="ic" style="left:0;top:146px" width="886" height="26" viewBox="0 0 886 26">
 <path d="M94.5,9.5 l8,8 m0,-8 l-8,8" stroke="#111" stroke-width="1.1"/>
 <g stroke="#b9b9b9" stroke-width="1.1"><path d="M194.5,9.5 l8,8 m0,-8 l-8,8"/><path d="M294.5,9.5 l8,8 m0,-8 l-8,8"/><path d="M394.5,9.5 l8,8 m0,-8 l-8,8"/><path d="M494.5,9.5 l8,8 m0,-8 l-8,8"/><path d="M594.5,9.5 l8,8 m0,-8 l-8,8"/><path d="M712.5,9.5 l8,8 m0,-8 l-8,8"/></g>
 <path d="M864.5,6.5 h5 v5 h5 v5 h-5 v5 h-5 v-5 h-5 v-5 h5 z" fill="#b2e8a6" stroke="#7ed072" stroke-width="1"/>
</svg>
<div id="stripline"></div>
<span class="t" style="left:27.3px;top:6px;font-size:12px;color:#000;letter-spacing:-0.086px;">Article: TN-28016</span>
<span class="t" style="left:20.4px;top:36px;font-size:12px;color:#1a1a1a;letter-spacing:-0.399px;">General</span>
<span class="t" style="left:88.7px;top:36px;font-size:12px;color:#1a1a1a;letter-spacing:-0.200px;">Assignments</span>
<span class="t" style="left:181.8px;top:36px;font-size:12px;color:#1a1a1a;letter-spacing:0.320px;">Input / Output</span>
<span class="t" style="left:44.6px;top:94px;font-size:12px;color:#1a1a1a;letter-spacing:-0.353px;">Create</span>
<span class="t" style="left:19.5px;top:107px;font-size:12px;color:#1a1a1a;letter-spacing:0.029px;">index, with link</span>
<span class="t" style="left:126.3px;top:94px;font-size:12px;color:#1a1a1a;letter-spacing:-0.486px;">Create</span>
<span class="t" style="left:117.1px;top:107px;font-size:12px;color:#1a1a1a;letter-spacing:0.037px;">derivation</span>
<span class="t" style="left:212.2px;top:94px;font-size:12px;color:#1a1a1a;letter-spacing:-0.520px;">Create</span>
<span class="t" style="left:178.0px;top:107px;font-size:12px;color:#1a1a1a;letter-spacing:0.063px;">derivation, with link</span>
<span class="t" style="left:303.2px;top:94px;font-size:12px;color:#1a1a1a;letter-spacing:-0.190px;">Show Version</span>
<span class="t" style="left:305.2px;top:107px;font-size:12px;color:#1a1a1a;letter-spacing:-0.094px;">Management</span>
<span class="t" style="left:394.2px;top:94px;font-size:12px;color:#1a1a1a;letter-spacing:-0.393px;">Call</span>
<span class="t" style="left:389.5px;top:107px;font-size:12px;color:#1a1a1a;letter-spacing:-0.141px;">report</span>
<span class="t" style="left:449.5px;top:94px;font-size:12px;color:#1a1a1a;letter-spacing:-0.403px;">Copy</span>
<span class="t" style="left:432.6px;top:107px;font-size:12px;color:#1a1a1a;letter-spacing:-0.849px;">HELiOS URL</span>
<span class="t" style="left:515.9px;top:94px;font-size:12px;color:#1a1a1a;letter-spacing:-0.450px;">ID</span>
<span class="t" style="left:135.8px;top:125px;font-size:12px;color:#a3a3a3;letter-spacing:0.262px;">Input</span>
<span class="t" style="left:403.8px;top:125px;font-size:12px;color:#a3a3a3;letter-spacing:0.163px;">Output</span>
<span class="t" style="left:12.2px;top:153px;font-size:12px;color:#1a1a1a;letter-spacing:-0.192px;">Mask</span>
<span class="t" style="left:112.5px;top:153px;font-size:12px;color:#1a1a1a;letter-spacing:-0.132px;">Documents</span>
<span class="t" style="left:212.5px;top:153px;font-size:12px;color:#1a1a1a;letter-spacing:-0.025px;">Utilized items</span>
<span class="t" style="left:312.0px;top:153px;font-size:12px;color:#1a1a1a;letter-spacing:-0.203px;">Graphic</span>
<span class="t" style="left:411.9px;top:153px;font-size:12px;color:#1a1a1a;letter-spacing:-0.065px;">Targets</span>
<span class="t" style="left:511.8px;top:153px;font-size:12px;color:#1a1a1a;letter-spacing:-0.332px;">Sources</span>
<span class="t" style="left:612.4px;top:153px;font-size:12px;color:#1a1a1a;letter-spacing:-0.016px;">Product structure</span>
<div style="left:384px;top:96px;width:6.6px;height:26px;background:#fff"></div>
<!-- red ellipse -->
<svg class="ic" style="left:280px;top:50px" width="120" height="95" viewBox="280 50 120 95"><ellipse cx="339.05" cy="96.1" rx="53.75" ry="42.3" fill="none" stroke="#f3000c" stroke-width="3"/></svg>
<div id="content"></div>
<div id="cedge"></div><div id="cedge2"></div>
<!-- form -->
<div class="f" style="left:322px;top:247px;width:129px;height:19px;background:#c8c8fa"></div>
<div class="f" style="left:322px;top:273px;width:129px;height:19px"></div>
<div class="f" style="left:322px;top:299px;width:129px;height:19px"></div>
<div class="f" style="left:554px;top:247px;width:27px;height:19px"></div>
<div class="gb" style="left:300px;top:360px;width:446px;height:96px"></div>
<div class="f" style="left:322px;top:373px;width:118px;height:20px"></div>
<div class="f" style="left:322px;top:399px;width:118px;height:18px"></div>
<div class="f" style="left:322px;top:425px;width:118px;height:20px"></div>
<div class="f" style="left:554px;top:373px;width:180px;height:20px"></div>
<div class="f" style="left:554px;top:399px;width:180px;height:18px"></div>
<div class="f" style="left:554px;top:425px;width:180px;height:20px"></div>
<div class="gb" style="left:300px;top:477px;width:446px;height:119px"></div>
<div style="left:300px;top:491px;width:32px;height:19px;border:1px solid #8a8a8a;border-radius:3px;background:linear-gradient(180deg,#fafafa,#e8e8e8)"></div>
<div class="f" style="left:350px;top:490px;width:68px;height:20px"></div>
<div class="f" style="left:322px;top:541px;width:103px;height:19px"></div>
<div class="f" style="left:322px;top:565px;width:412px;height:20px"></div>
<div class="f" style="left:554px;top:490px;width:180px;height:20px"></div>
<div class="f" style="left:554px;top:516px;width:180px;height:20px"></div>
<div class="f" style="left:554px;top:541px;width:180px;height:19px"></div>
<div class="gb" style="left:300px;top:617px;width:448px;height:80px"></div>
<div class="f" style="left:554px;top:630px;width:83px;height:20px"></div>
<div class="f" style="left:653px;top:630px;width:83px;height:20px"></div>
<span class="t" style="left:512.0px;top:251px;font-size:11px;color:#000080;letter-spacing:0.134px;font-weight:bold;">Index:</span>
<span class="t" style="left:449.6px;top:377px;font-size:11px;color:#000080;letter-spacing:0.169px;font-weight:bold;">Release:</span>
<span class="t" style="left:449.6px;top:402px;font-size:11px;color:#000080;letter-spacing:0.086px;font-weight:bold;">Part type:</span>
<span class="t" style="left:449.6px;top:429px;font-size:11px;color:#000080;letter-spacing:0.157px;font-weight:bold;">Drawing/Manuf.:</span>
<span class="t" style="left:449.6px;top:494px;font-size:11px;color:#000080;letter-spacing:0.130px;font-weight:bold;">Order quantity:</span>
<span class="t" style="left:449.6px;top:520px;font-size:11px;color:#000080;letter-spacing:0.157px;font-weight:bold;">Resourcing:</span>
<span class="t" style="left:449.6px;top:545px;font-size:11px;color:#000080;letter-spacing:0.182px;font-weight:bold;">Order note:</span>
<span class="t" style="left:449.6px;top:634px;font-size:11px;color:#000080;letter-spacing:0.222px;font-weight:bold;">Created:</span>
<span class="t" style="left:555.3px;top:377px;font-size:12px;color:#000;letter-spacing:0.122px;">In Progress</span>
<span class="t" style="left:555.3px;top:401px;font-size:12px;color:#000;letter-spacing:0.102px;">Standard-part</span>
<span class="t" style="left:555.3px;top:494px;font-size:12px;color:#000;letter-spacing:0.136px;">Piece</span>
<span class="t" style="left:555.5px;top:634px;font-size:12px;color:#000;letter-spacing:0.094px;">12.09.2006</span>
<span class="t" style="left:654.5px;top:634px;font-size:12px;color:#000;letter-spacing:0.101px;">Administrator</span>
<span class="t" style="left:320.6px;top:377px;font-size:12px;color:#000;letter-spacing:0.113px;">ball bearing</span>
<span class="t" style="left:321.6px;top:429px;font-size:12px;color:#000;letter-spacing:0.126px;">5</span>
<span class="t" style="left:322.0px;top:520px;font-size:11px;color:#000080;letter-spacing:-0.087px;">g]</span>
<span class="t" style="left:323.0px;top:493px;font-size:11px;color:#444;letter-spacing:-0.556px;">..</span>
<!-- ISD logo -->
<svg class="ic" style="left:618px;top:248px" width="126" height="43" viewBox="0 0 126 43">
 <defs><linearGradient id="isdbg" x1="0" y1="0" x2="0" y2="1"><stop offset="0" stop-color="#6a9ee0"/><stop offset="0.45" stop-color="#2c64c0"/><stop offset="0.5" stop-color="#1c50ac"/><stop offset="1" stop-color="#2a62bc"/></linearGradient>
 <linearGradient id="isds" x1="0" y1="0" x2="0" y2="1"><stop offset="0" stop-color="#f2f2f2"/><stop offset="0.45" stop-color="#d0d4d6"/><stop offset="0.5" stop-color="#a8aeb0"/><stop offset="1" stop-color="#d8dcde"/></linearGradient></defs>
 <rect x="0.5" y="0.5" width="125" height="42" fill="#e8eef4" stroke="#b4bcc4"/>
 <rect x="2.5" y="2.5" width="121" height="38" fill="url(#isds)" stroke="#3c78cc"/>
 <rect x="3" y="3" width="60" height="37" fill="url(#isdbg)"/>
 <g font-family="Liberation Sans,sans-serif" font-weight="bold" font-size="33.5" fill="#fff"><text transform="translate(7.5,33.6) scale(0.64,1)">I</text><text transform="translate(23.3,33.6) scale(0.45,1)">S</text><text transform="translate(45.7,33.6) scale(0.49,1)">D</text></g>
 <rect x="16.6" y="20.4" width="2.4" height="2.8" fill="#fff"/><rect x="39.4" y="20.4" width="2.4" height="2.8" fill="#fff"/>
 <path d="M69.6,18.6 C78,10 88,6.6 96,7 C105,7.6 112,12 117.4,18.6 C110,13.6 102,10.6 94,10.4 C85,10.4 77,13.6 69.6,18.6Z" fill="#111"/>
 <path d="M80,30.6 C92,36.6 106,33 115.6,21.8 C106,30 94,32.6 80,30.6Z" fill="#111"/>
 <circle cx="90.4" cy="20.6" r="8.4" fill="#111"/>
 <path d="M86.8,13.6 L89.2,20.6 L91.4,19.8 Z" fill="#fff"/>
</svg>
<!-- menu -->
<div id="mshadow"></div>
<div id="menu"></div>
<div id="mstrip"></div>
<div id="mwl"></div><div id="mwr"></div>
<div class="mh" style="top:188px"></div><div class="mh" style="top:336px"></div><div class="mh" style="top:456px"></div><div class="mh" style="top:602px"></div><div class="ms" style="top:258px"></div><div class="ms" style="top:308px"></div><div class="ms" style="top:550px"></div><div class="ma" style="top:389px"></div><div class="ma" style="top:413px"></div><div class="ma" style="top:437px"></div>
<svg class="ic" style="left:119px;top:212px" width="17" height="17" viewBox="0 0 17 17"><g transform="translate(8.4,8) rotate(-15) scale(0.88,1)"><path d="M7.7,0.0 L8.0,0.5 L7.9,0.9 L7.9,1.4 L7.5,1.7 L6.6,2.0 L6.2,2.2 L6.1,2.6 L5.9,2.9 L6.0,3.4 L6.5,4.1 L6.5,4.7 L6.2,5.1 L5.9,5.4 L5.4,5.5 L4.5,5.2 L4.0,5.2 L3.7,5.4 L3.4,5.7 L3.2,6.1 L3.2,7.0 L2.9,7.5 L2.5,7.6 L2.0,7.7 L1.5,7.6 L1.0,6.9 L0.6,6.6 L0.2,6.6 L-0.2,6.6 L-0.6,6.9 L-1.1,7.6 L-1.6,7.8 L-2.0,7.7 L-2.5,7.6 L-2.8,7.2 L-2.9,6.3 L-3.1,5.8 L-3.4,5.7 L-3.7,5.4 L-4.2,5.5 L-5.0,5.8 L-5.6,5.7 L-5.9,5.4 L-6.2,5.1 L-6.2,4.5 L-5.8,3.7 L-5.7,3.2 L-5.9,2.9 L-6.1,2.6 L-6.5,2.3 L-7.4,2.2 L-7.8,1.8 L-7.9,1.4 L-7.9,0.9 L-7.7,0.4 L-6.9,0.0 L-6.6,-0.4 L-6.6,-0.8 L-6.5,-1.1 L-6.7,-1.6 L-7.4,-2.2 L-7.5,-2.7 L-7.4,-3.1 L-7.2,-3.5 L-6.7,-3.8 L-5.8,-3.7 L-5.3,-3.9 L-5.1,-4.2 L-4.9,-4.5 L-4.8,-4.9 L-5.0,-5.8 L-4.9,-6.3 L-4.5,-6.6 L-4.1,-6.9 L-3.6,-6.8 L-2.9,-6.3 L-2.4,-6.2 L-2.0,-6.3 L-1.7,-6.4 L-1.4,-6.8 L-1.1,-7.6 L-0.7,-8.0 L-0.2,-8.0 L0.2,-8.0 L0.7,-7.7 L1.0,-6.9 L1.3,-6.5 L1.7,-6.4 L2.0,-6.3 L2.5,-6.4 L3.2,-7.0 L3.7,-7.1 L4.1,-6.9 L4.5,-6.6 L4.7,-6.1 L4.5,-5.2 L4.6,-4.7 L4.9,-4.5 L5.1,-4.2 L5.6,-4.1 L6.5,-4.1 L7.0,-3.9 L7.2,-3.5 L7.4,-3.1 L7.3,-2.6 L6.6,-2.0 L6.4,-1.5 L6.5,-1.1 L6.6,-0.8 L6.9,-0.4Z M-3.60,0.00 a3.60,4.20 0 1,0 7.20,0 a3.60,4.20 0 1,0 -7.20,0Z" fill="url(#gs)" fill-rule="evenodd" stroke="#8e8eae" stroke-width="0.5"/></g><path d="M6.2,13.4 L7,11 L12.6,5.4 L14.4,7.2 L8.8,12.8 Z" fill="#f0b828" stroke="#b88410" stroke-width="0.5"/><path d="M12.6,5.4 L13.8,4.2 L15.6,6 L14.4,7.2Z" fill="#d01818"/><path d="M6.2,13.4 L7,11.4 L8.4,12.8Z" fill="#333"/></svg><svg class="ic" style="left:119px;top:236px" width="17" height="17" viewBox="0 0 17 17"><g transform="translate(8.4,8) rotate(-15) scale(0.88,1)"><path d="M7.7,0.0 L8.0,0.5 L7.9,0.9 L7.9,1.4 L7.5,1.7 L6.6,2.0 L6.2,2.2 L6.1,2.6 L5.9,2.9 L6.0,3.4 L6.5,4.1 L6.5,4.7 L6.2,5.1 L5.9,5.4 L5.4,5.5 L4.5,5.2 L4.0,5.2 L3.7,5.4 L3.4,5.7 L3.2,6.1 L3.2,7.0 L2.9,7.5 L2.5,7.6 L2.0,7.7 L1.5,7.6 L1.0,6.9 L0.6,6.6 L0.2,6.6 L-0.2,6.6 L-0.6,6.9 L-1.1,7.6 L-1.6,7.8 L-2.0,7.7 L-2.5,7.6 L-2.8,7.2 L-2.9,6.3 L-3.1,5.8 L-3.4,5.7 L-3.7,5.4 L-4.2,5.5 L-5.0,5.8 L-5.6,5.7 L-5.9,5.4 L-6.2,5.1 L-6.2,4.5 L-5.8,3.7 L-5.7,3.2 L-5.9,2.9 L-6.1,2.6 L-6.5,2.3 L-7.4,2.2 L-7.8,1.8 L-7.9,1.4 L-7.9,0.9 L-7.7,0.4 L-6.9,0.0 L-6.6,-0.4 L-6.6,-0.8 L-6.5,-1.1 L-6.7,-1.6 L-7.4,-2.2 L-7.5,-2.7 L-7.4,-3.1 L-7.2,-3.5 L-6.7,-3.8 L-5.8,-3.7 L-5.3,-3.9 L-5.1,-4.2 L-4.9,-4.5 L-4.8,-4.9 L-5.0,-5.8 L-4.9,-6.3 L-4.5,-6.6 L-4.1,-6.9 L-3.6,-6.8 L-2.9,-6.3 L-2.4,-6.2 L-2.0,-6.3 L-1.7,-6.4 L-1.4,-6.8 L-1.1,-7.6 L-0.7,-8.0 L-0.2,-8.0 L0.2,-8.0 L0.7,-7.7 L1.0,-6.9 L1.3,-6.5 L1.7,-6.4 L2.0,-6.3 L2.5,-6.4 L3.2,-7.0 L3.7,-7.1 L4.1,-6.9 L4.5,-6.6 L4.7,-6.1 L4.5,-5.2 L4.6,-4.7 L4.9,-4.5 L5.1,-4.2 L5.6,-4.1 L6.5,-4.1 L7.0,-3.9 L7.2,-3.5 L7.4,-3.1 L7.3,-2.6 L6.6,-2.0 L6.4,-1.5 L6.5,-1.1 L6.6,-0.8 L6.9,-0.4Z M-3.60,0.00 a3.60,4.20 0 1,0 7.20,0 a3.60,4.20 0 1,0 -7.20,0Z" fill="url(#gs)" fill-rule="evenodd" stroke="#8e8eae" stroke-width="0.5"/></g><circle cx="11.4" cy="6.4" r="2.3" fill="#4a6ae0"/><path d="M9.6,8 h4 l1,3.4 a3,2.2 0 0,1 -6,0 z" fill="#5478e8"/><circle cx="10.8" cy="5.8" r="0.9" fill="#c8d4fc"/><path d="M11.6,13 l-0.6,2.6" stroke="#555" stroke-width="0.9"/></svg><svg class="ic" style="left:119px;top:262px" width="17" height="17" viewBox="0 0 17 17"><g transform="translate(8.4,8) rotate(-15) scale(0.88,1)"><path d="M7.7,0.0 L8.0,0.5 L7.9,0.9 L7.9,1.4 L7.5,1.7 L6.6,2.0 L6.2,2.2 L6.1,2.6 L5.9,2.9 L6.0,3.4 L6.5,4.1 L6.5,4.7 L6.2,5.1 L5.9,5.4 L5.4,5.5 L4.5,5.2 L4.0,5.2 L3.7,5.4 L3.4,5.7 L3.2,6.1 L3.2,7.0 L2.9,7.5 L2.5,7.6 L2.0,7.7 L1.5,7.6 L1.0,6.9 L0.6,6.6 L0.2,6.6 L-0.2,6.6 L-0.6,6.9 L-1.1,7.6 L-1.6,7.8 L-2.0,7.7 L-2.5,7.6 L-2.8,7.2 L-2.9,6.3 L-3.1,5.8 L-3.4,5.7 L-3.7,5.4 L-4.2,5.5 L-5.0,5.8 L-5.6,5.7 L-5.9,5.4 L-6.2,5.1 L-6.2,4.5 L-5.8,3.7 L-5.7,3.2 L-5.9,2.9 L-6.1,2.6 L-6.5,2.3 L-7.4,2.2 L-7.8,1.8 L-7.9,1.4 L-7.9,0.9 L-7.7,0.4 L-6.9,0.0 L-6.6,-0.4 L-6.6,-0.8 L-6.5,-1.1 L-6.7,-1.6 L-7.4,-2.2 L-7.5,-2.7 L-7.4,-3.1 L-7.2,-3.5 L-6.7,-3.8 L-5.8,-3.7 L-5.3,-3.9 L-5.1,-4.2 L-4.9,-4.5 L-4.8,-4.9 L-5.0,-5.8 L-4.9,-6.3 L-4.5,-6.6 L-4.1,-6.9 L-3.6,-6.8 L-2.9,-6.3 L-2.4,-6.2 L-2.0,-6.3 L-1.7,-6.4 L-1.4,-6.8 L-1.1,-7.6 L-0.7,-8.0 L-0.2,-8.0 L0.2,-8.0 L0.7,-7.7 L1.0,-6.9 L1.3,-6.5 L1.7,-6.4 L2.0,-6.3 L2.5,-6.4 L3.2,-7.0 L3.7,-7.1 L4.1,-6.9 L4.5,-6.6 L4.7,-6.1 L4.5,-5.2 L4.6,-4.7 L4.9,-4.5 L5.1,-4.2 L5.6,-4.1 L6.5,-4.1 L7.0,-3.9 L7.2,-3.5 L7.4,-3.1 L7.3,-2.6 L6.6,-2.0 L6.4,-1.5 L6.5,-1.1 L6.6,-0.8 L6.9,-0.4Z M-3.60,0.00 a3.60,4.20 0 1,0 7.20,0 a3.60,4.20 0 1,0 -7.20,0Z" fill="url(#gs)" fill-rule="evenodd" stroke="#8e8eae" stroke-width="0.5"/></g><circle cx="3.8" cy="12" r="3.3" fill="#4cc040" stroke="#2c9428" stroke-width="0.5"/><path d="M2,12.2 l1.4,1.3 l2.4,-2.6" stroke="#fff" stroke-width="1.1" fill="none"/><rect x="8.6" y="7.8" width="3.4" height="3.4" fill="#28a030" stroke="#111" stroke-width="0.6"/><rect x="12.2" y="11.6" width="3.4" height="3.4" fill="#d81818" stroke="#111" stroke-width="0.6"/><path d="M9,11.6 v2.2 h3" stroke="#111" stroke-width="0.9" fill="none"/></svg><svg class="ic" style="left:119px;top:286px" width="17" height="17" viewBox="0 0 17 17"><g transform="translate(8.4,8) rotate(-15) scale(0.88,1)"><path d="M7.7,0.0 L8.0,0.5 L7.9,0.9 L7.9,1.4 L7.5,1.7 L6.6,2.0 L6.2,2.2 L6.1,2.6 L5.9,2.9 L6.0,3.4 L6.5,4.1 L6.5,4.7 L6.2,5.1 L5.9,5.4 L5.4,5.5 L4.5,5.2 L4.0,5.2 L3.7,5.4 L3.4,5.7 L3.2,6.1 L3.2,7.0 L2.9,7.5 L2.5,7.6 L2.0,7.7 L1.5,7.6 L1.0,6.9 L0.6,6.6 L0.2,6.6 L-0.2,6.6 L-0.6,6.9 L-1.1,7.6 L-1.6,7.8 L-2.0,7.7 L-2.5,7.6 L-2.8,7.2 L-2.9,6.3 L-3.1,5.8 L-3.4,5.7 L-3.7,5.4 L-4.2,5.5 L-5.0,5.8 L-5.6,5.7 L-5.9,5.4 L-6.2,5.1 L-6.2,4.5 L-5.8,3.7 L-5.7,3.2 L-5.9,2.9 L-6.1,2.6 L-6.5,2.3 L-7.4,2.2 L-7.8,1.8 L-7.9,1.4 L-7.9,0.9 L-7.7,0.4 L-6.9,0.0 L-6.6,-0.4 L-6.6,-0.8 L-6.5,-1.1 L-6.7,-1.6 L-7.4,-2.2 L-7.5,-2.7 L-7.4,-3.1 L-7.2,-3.5 L-6.7,-3.8 L-5.8,-3.7 L-5.3,-3.9 L-5.1,-4.2 L-4.9,-4.5 L-4.8,-4.9 L-5.0,-5.8 L-4.9,-6.3 L-4.5,-6.6 L-4.1,-6.9 L-3.6,-6.8 L-2.9,-6.3 L-2.4,-6.2 L-2.0,-6.3 L-1.7,-6.4 L-1.4,-6.8 L-1.1,-7.6 L-0.7,-8.0 L-0.2,-8.0 L0.2,-8.0 L0.7,-7.7 L1.0,-6.9 L1.3,-6.5 L1.7,-6.4 L2.0,-6.3 L2.5,-6.4 L3.2,-7.0 L3.7,-7.1 L4.1,-6.9 L4.5,-6.6 L4.7,-6.1 L4.5,-5.2 L4.6,-4.7 L4.9,-4.5 L5.1,-4.2 L5.6,-4.1 L6.5,-4.1 L7.0,-3.9 L7.2,-3.5 L7.4,-3.1 L7.3,-2.6 L6.6,-2.0 L6.4,-1.5 L6.5,-1.1 L6.6,-0.8 L6.9,-0.4Z M-3.60,0.00 a3.60,4.20 0 1,0 7.20,0 a3.60,4.20 0 1,0 -7.20,0Z" fill="url(#gs)" fill-rule="evenodd" stroke="#8e8eae" stroke-width="0.5"/></g><circle cx="11.2" cy="8.6" r="2.5" fill="#e8903c" stroke="#222" stroke-width="0.9"/><path d="M6.8,15.6 a4.4,3.6 0 0,1 8.8,0 z" fill="#3c6ce0" stroke="#2850b8" stroke-width="0.5"/></svg><svg class="ic" style="left:119px;top:312px" width="17" height="17" viewBox="0 0 17 17"><g transform="translate(8.4,8) rotate(-15) scale(0.88,1)"><path d="M7.7,0.0 L8.0,0.5 L7.9,0.9 L7.9,1.4 L7.5,1.7 L6.6,2.0 L6.2,2.2 L6.1,2.6 L5.9,2.9 L6.0,3.4 L6.5,4.1 L6.5,4.7 L6.2,5.1 L5.9,5.4 L5.4,5.5 L4.5,5.2 L4.0,5.2 L3.7,5.4 L3.4,5.7 L3.2,6.1 L3.2,7.0 L2.9,7.5 L2.5,7.6 L2.0,7.7 L1.5,7.6 L1.0,6.9 L0.6,6.6 L0.2,6.6 L-0.2,6.6 L-0.6,6.9 L-1.1,7.6 L-1.6,7.8 L-2.0,7.7 L-2.5,7.6 L-2.8,7.2 L-2.9,6.3 L-3.1,5.8 L-3.4,5.7 L-3.7,5.4 L-4.2,5.5 L-5.0,5.8 L-5.6,5.7 L-5.9,5.4 L-6.2,5.1 L-6.2,4.5 L-5.8,3.7 L-5.7,3.2 L-5.9,2.9 L-6.1,2.6 L-6.5,2.3 L-7.4,2.2 L-7.8,1.8 L-7.9,1.4 L-7.9,0.9 L-7.7,0.4 L-6.9,0.0 L-6.6,-0.4 L-6.6,-0.8 L-6.5,-1.1 L-6.7,-1.6 L-7.4,-2.2 L-7.5,-2.7 L-7.4,-3.1 L-7.2,-3.5 L-6.7,-3.8 L-5.8,-3.7 L-5.3,-3.9 L-5.1,-4.2 L-4.9,-4.5 L-4.8,-4.9 L-5.0,-5.8 L-4.9,-6.3 L-4.5,-6.6 L-4.1,-6.9 L-3.6,-6.8 L-2.9,-6.3 L-2.4,-6.2 L-2.0,-6.3 L-1.7,-6.4 L-1.4,-6.8 L-1.1,-7.6 L-0.7,-8.0 L-0.2,-8.0 L0.2,-8.0 L0.7,-7.7 L1.0,-6.9 L1.3,-6.5 L1.7,-6.4 L2.0,-6.3 L2.5,-6.4 L3.2,-7.0 L3.7,-7.1 L4.1,-6.9 L4.5,-6.6 L4.7,-6.1 L4.5,-5.2 L4.6,-4.7 L4.9,-4.5 L5.1,-4.2 L5.6,-4.1 L6.5,-4.1 L7.0,-3.9 L7.2,-3.5 L7.4,-3.1 L7.3,-2.6 L6.6,-2.0 L6.4,-1.5 L6.5,-1.1 L6.6,-0.8 L6.9,-0.4Z M-3.60,0.00 a3.60,4.20 0 1,0 7.20,0 a3.60,4.20 0 1,0 -7.20,0Z" fill="url(#gs)" fill-rule="evenodd" stroke="#8e8eae" stroke-width="0.5"/></g><rect x="6.8" y="9" width="9.2" height="6.6" fill="#fff" stroke="#555" stroke-width="0.7"/><text x="7.4" y="14.6" font-family="Liberation Sans,sans-serif" font-size="6" font-weight="bold" fill="#222">x/y</text></svg><svg class="ic" style="left:119px;top:360px" width="17" height="17" viewBox="0 0 17 17"><g transform="translate(8.4,8) rotate(-15) scale(0.88,1)"><path d="M7.7,0.0 L8.0,0.5 L7.9,0.9 L7.9,1.4 L7.5,1.7 L6.6,2.0 L6.2,2.2 L6.1,2.6 L5.9,2.9 L6.0,3.4 L6.5,4.1 L6.5,4.7 L6.2,5.1 L5.9,5.4 L5.4,5.5 L4.5,5.2 L4.0,5.2 L3.7,5.4 L3.4,5.7 L3.2,6.1 L3.2,7.0 L2.9,7.5 L2.5,7.6 L2.0,7.7 L1.5,7.6 L1.0,6.9 L0.6,6.6 L0.2,6.6 L-0.2,6.6 L-0.6,6.9 L-1.1,7.6 L-1.6,7.8 L-2.0,7.7 L-2.5,7.6 L-2.8,7.2 L-2.9,6.3 L-3.1,5.8 L-3.4,5.7 L-3.7,5.4 L-4.2,5.5 L-5.0,5.8 L-5.6,5.7 L-5.9,5.4 L-6.2,5.1 L-6.2,4.5 L-5.8,3.7 L-5.7,3.2 L-5.9,2.9 L-6.1,2.6 L-6.5,2.3 L-7.4,2.2 L-7.8,1.8 L-7.9,1.4 L-7.9,0.9 L-7.7,0.4 L-6.9,0.0 L-6.6,-0.4 L-6.6,-0.8 L-6.5,-1.1 L-6.7,-1.6 L-7.4,-2.2 L-7.5,-2.7 L-7.4,-3.1 L-7.2,-3.5 L-6.7,-3.8 L-5.8,-3.7 L-5.3,-3.9 L-5.1,-4.2 L-4.9,-4.5 L-4.8,-4.9 L-5.0,-5.8 L-4.9,-6.3 L-4.5,-6.6 L-4.1,-6.9 L-3.6,-6.8 L-2.9,-6.3 L-2.4,-6.2 L-2.0,-6.3 L-1.7,-6.4 L-1.4,-6.8 L-1.1,-7.6 L-0.7,-8.0 L-0.2,-8.0 L0.2,-8.0 L0.7,-7.7 L1.0,-6.9 L1.3,-6.5 L1.7,-6.4 L2.0,-6.3 L2.5,-6.4 L3.2,-7.0 L3.7,-7.1 L4.1,-6.9 L4.5,-6.6 L4.7,-6.1 L4.5,-5.2 L4.6,-4.7 L4.9,-4.5 L5.1,-4.2 L5.6,-4.1 L6.5,-4.1 L7.0,-3.9 L7.2,-3.5 L7.4,-3.1 L7.3,-2.6 L6.6,-2.0 L6.4,-1.5 L6.5,-1.1 L6.6,-0.8 L6.9,-0.4Z M-3.60,0.00 a3.60,4.20 0 1,0 7.20,0 a3.60,4.20 0 1,0 -7.20,0Z" fill="url(#gs)" fill-rule="evenodd" stroke="#8e8eae" stroke-width="0.5"/></g><circle cx="11.4" cy="8.6" r="2.2" fill="#38b838" stroke="#1c7c1c" stroke-width="0.5"/><path d="M7.4,15.6 a4,3.4 0 0,1 8,0 z" fill="#3c6ce0" stroke="#2850b8" stroke-width="0.5"/></svg><svg class="ic" style="left:119px;top:480px" width="17" height="17" viewBox="0 0 17 17"><g transform="translate(8.4,8) rotate(-15) scale(0.88,1)"><path d="M7.7,0.0 L8.0,0.5 L7.9,0.9 L7.9,1.4 L7.5,1.7 L6.6,2.0 L6.2,2.2 L6.1,2.6 L5.9,2.9 L6.0,3.4 L6.5,4.1 L6.5,4.7 L6.2,5.1 L5.9,5.4 L5.4,5.5 L4.5,5.2 L4.0,5.2 L3.7,5.4 L3.4,5.7 L3.2,6.1 L3.2,7.0 L2.9,7.5 L2.5,7.6 L2.0,7.7 L1.5,7.6 L1.0,6.9 L0.6,6.6 L0.2,6.6 L-0.2,6.6 L-0.6,6.9 L-1.1,7.6 L-1.6,7.8 L-2.0,7.7 L-2.5,7.6 L-2.8,7.2 L-2.9,6.3 L-3.1,5.8 L-3.4,5.7 L-3.7,5.4 L-4.2,5.5 L-5.0,5.8 L-5.6,5.7 L-5.9,5.4 L-6.2,5.1 L-6.2,4.5 L-5.8,3.7 L-5.7,3.2 L-5.9,2.9 L-6.1,2.6 L-6.5,2.3 L-7.4,2.2 L-7.8,1.8 L-7.9,1.4 L-7.9,0.9 L-7.7,0.4 L-6.9,0.0 L-6.6,-0.4 L-6.6,-0.8 L-6.5,-1.1 L-6.7,-1.6 L-7.4,-2.2 L-7.5,-2.7 L-7.4,-3.1 L-7.2,-3.5 L-6.7,-3.8 L-5.8,-3.7 L-5.3,-3.9 L-5.1,-4.2 L-4.9,-4.5 L-4.8,-4.9 L-5.0,-5.8 L-4.9,-6.3 L-4.5,-6.6 L-4.1,-6.9 L-3.6,-6.8 L-2.9,-6.3 L-2.4,-6.2 L-2.0,-6.3 L-1.7,-6.4 L-1.4,-6.8 L-1.1,-7.6 L-0.7,-8.0 L-0.2,-8.0 L0.2,-8.0 L0.7,-7.7 L1.0,-6.9 L1.3,-6.5 L1.7,-6.4 L2.0,-6.3 L2.5,-6.4 L3.2,-7.0 L3.7,-7.1 L4.1,-6.9 L4.5,-6.6 L4.7,-6.1 L4.5,-5.2 L4.6,-4.7 L4.9,-4.5 L5.1,-4.2 L5.6,-4.1 L6.5,-4.1 L7.0,-3.9 L7.2,-3.5 L7.4,-3.1 L7.3,-2.6 L6.6,-2.0 L6.4,-1.5 L6.5,-1.1 L6.6,-0.8 L6.9,-0.4Z M-3.60,0.00 a3.60,4.20 0 1,0 7.20,0 a3.60,4.20 0 1,0 -7.20,0Z" fill="url(#gs)" fill-rule="evenodd" stroke="#8e8eae" stroke-width="0.5"/></g><path d="M10.8,11.6 l1.6,-1.6 l3.6,3.8 q0.2,1.8 -1.8,1.8 z" fill="#3c7ce8" stroke="#1c50c0" stroke-width="0.5"/><path d="M8.6,9 l1.6,-0.8 l1.6,1.4 l-0.2,1.8 l-1.8,0.4z" fill="#8c8c90"/></svg><svg class="ic" style="left:119px;top:504px" width="17" height="17" viewBox="0 0 17 17"><g transform="translate(8.4,8) rotate(-15) scale(0.88,1)"><path d="M7.7,0.0 L8.0,0.5 L7.9,0.9 L7.9,1.4 L7.5,1.7 L6.6,2.0 L6.2,2.2 L6.1,2.6 L5.9,2.9 L6.0,3.4 L6.5,4.1 L6.5,4.7 L6.2,5.1 L5.9,5.4 L5.4,5.5 L4.5,5.2 L4.0,5.2 L3.7,5.4 L3.4,5.7 L3.2,6.1 L3.2,7.0 L2.9,7.5 L2.5,7.6 L2.0,7.7 L1.5,7.6 L1.0,6.9 L0.6,6.6 L0.2,6.6 L-0.2,6.6 L-0.6,6.9 L-1.1,7.6 L-1.6,7.8 L-2.0,7.7 L-2.5,7.6 L-2.8,7.2 L-2.9,6.3 L-3.1,5.8 L-3.4,5.7 L-3.7,5.4 L-4.2,5.5 L-5.0,5.8 L-5.6,5.7 L-5.9,5.4 L-6.2,5.1 L-6.2,4.5 L-5.8,3.7 L-5.7,3.2 L-5.9,2.9 L-6.1,2.6 L-6.5,2.3 L-7.4,2.2 L-7.8,1.8 L-7.9,1.4 L-7.9,0.9 L-7.7,0.4 L-6.9,0.0 L-6.6,-0.4 L-6.6,-0.8 L-6.5,-1.1 L-6.7,-1.6 L-7.4,-2.2 L-7.5,-2.7 L-7.4,-3.1 L-7.2,-3.5 L-6.7,-3.8 L-5.8,-3.7 L-5.3,-3.9 L-5.1,-4.2 L-4.9,-4.5 L-4.8,-4.9 L-5.0,-5.8 L-4.9,-6.3 L-4.5,-6.6 L-4.1,-6.9 L-3.6,-6.8 L-2.9,-6.3 L-2.4,-6.2 L-2.0,-6.3 L-1.7,-6.4 L-1.4,-6.8 L-1.1,-7.6 L-0.7,-8.0 L-0.2,-8.0 L0.2,-8.0 L0.7,-7.7 L1.0,-6.9 L1.3,-6.5 L1.7,-6.4 L2.0,-6.3 L2.5,-6.4 L3.2,-7.0 L3.7,-7.1 L4.1,-6.9 L4.5,-6.6 L4.7,-6.1 L4.5,-5.2 L4.6,-4.7 L4.9,-4.5 L5.1,-4.2 L5.6,-4.1 L6.5,-4.1 L7.0,-3.9 L7.2,-3.5 L7.4,-3.1 L7.3,-2.6 L6.6,-2.0 L6.4,-1.5 L6.5,-1.1 L6.6,-0.8 L6.9,-0.4Z M-3.60,0.00 a3.60,4.20 0 1,0 7.20,0 a3.60,4.20 0 1,0 -7.20,0Z" fill="url(#gs)" fill-rule="evenodd" stroke="#8e8eae" stroke-width="0.5"/></g><path d="M2.6,7 L0.4,9.6 L1.6,9.6 C1.6,13 3,14.6 6.6,14.6 L6.6,16 L9.6,13.6 L6.6,11.4 L6.6,12.8 C4.2,12.8 3.4,12 3.4,9.6 L4.6,9.6 Z" fill="#d83020"/><path d="M10.8,11.6 l1.6,-1.6 l3.6,3.8 q0.2,1.8 -1.8,1.8 z" fill="#3c7ce8" stroke="#1c50c0" stroke-width="0.5"/><path d="M8.6,9 l1.6,-0.8 l1.6,1.4 l-0.2,1.8 l-1.8,0.4z" fill="#8c8c90"/></svg><svg class="ic" style="left:119px;top:528px" width="17" height="17" viewBox="0 0 17 17"><g transform="translate(8.4,8) rotate(-15) scale(0.88,1)"><path d="M7.7,0.0 L8.0,0.5 L7.9,0.9 L7.9,1.4 L7.5,1.7 L6.6,2.0 L6.2,2.2 L6.1,2.6 L5.9,2.9 L6.0,3.4 L6.5,4.1 L6.5,4.7 L6.2,5.1 L5.9,5.4 L5.4,5.5 L4.5,5.2 L4.0,5.2 L3.7,5.4 L3.4,5.7 L3.2,6.1 L3.2,7.0 L2.9,7.5 L2.5,7.6 L2.0,7.7 L1.5,7.6 L1.0,6.9 L0.6,6.6 L0.2,6.6 L-0.2,6.6 L-0.6,6.9 L-1.1,7.6 L-1.6,7.8 L-2.0,7.7 L-2.5,7.6 L-2.8,7.2 L-2.9,6.3 L-3.1,5.8 L-3.4,5.7 L-3.7,5.4 L-4.2,5.5 L-5.0,5.8 L-5.6,5.7 L-5.9,5.4 L-6.2,5.1 L-6.2,4.5 L-5.8,3.7 L-5.7,3.2 L-5.9,2.9 L-6.1,2.6 L-6.5,2.3 L-7.4,2.2 L-7.8,1.8 L-7.9,1.4 L-7.9,0.9 L-7.7,0.4 L-6.9,0.0 L-6.6,-0.4 L-6.6,-0.8 L-6.5,-1.1 L-6.7,-1.6 L-7.4,-2.2 L-7.5,-2.7 L-7.4,-3.1 L-7.2,-3.5 L-6.7,-3.8 L-5.8,-3.7 L-5.3,-3.9 L-5.1,-4.2 L-4.9,-4.5 L-4.8,-4.9 L-5.0,-5.8 L-4.9,-6.3 L-4.5,-6.6 L-4.1,-6.9 L-3.6,-6.8 L-2.9,-6.3 L-2.4,-6.2 L-2.0,-6.3 L-1.7,-6.4 L-1.4,-6.8 L-1.1,-7.6 L-0.7,-8.0 L-0.2,-8.0 L0.2,-8.0 L0.7,-7.7 L1.0,-6.9 L1.3,-6.5 L1.7,-6.4 L2.0,-6.3 L2.5,-6.4 L3.2,-7.0 L3.7,-7.1 L4.1,-6.9 L4.5,-6.6 L4.7,-6.1 L4.5,-5.2 L4.6,-4.7 L4.9,-4.5 L5.1,-4.2 L5.6,-4.1 L6.5,-4.1 L7.0,-3.9 L7.2,-3.5 L7.4,-3.1 L7.3,-2.6 L6.6,-2.0 L6.4,-1.5 L6.5,-1.1 L6.6,-0.8 L6.9,-0.4Z M-3.60,0.00 a3.60,4.20 0 1,0 7.20,0 a3.60,4.20 0 1,0 -7.20,0Z" fill="url(#gs)" fill-rule="evenodd" stroke="#8e8eae" stroke-width="0.5"/></g><path d="M8.4,1.6 h4.4 v1.4 h-3 v1.6 h2 a2.3,2.3 0 0,1 0,4.6 h-3.4 v-1.4 h3.2 a0.9,0.9 0 0,0 0,-1.8 h-3.2 z" fill="#d82020"/><path d="M10.8,11.6 l1.6,-1.6 l3.6,3.8 q0.2,1.8 -1.8,1.8 z" fill="#3c7ce8" stroke="#1c50c0" stroke-width="0.5"/><path d="M8.6,9 l1.6,-0.8 l1.6,1.4 l-0.2,1.8 l-1.8,0.4z" fill="#8c8c90"/></svg><svg class="ic" style="left:119px;top:554px" width="17" height="17" viewBox="0 0 17 17"><g transform="translate(11,6.2) rotate(-15) scale(0.6,0.7)"><path d="M7.7,0.0 L8.0,0.5 L7.9,0.9 L7.9,1.4 L7.5,1.7 L6.6,2.0 L6.2,2.2 L6.1,2.6 L5.9,2.9 L6.0,3.4 L6.5,4.1 L6.5,4.7 L6.2,5.1 L5.9,5.4 L5.4,5.5 L4.5,5.2 L4.0,5.2 L3.7,5.4 L3.4,5.7 L3.2,6.1 L3.2,7.0 L2.9,7.5 L2.5,7.6 L2.0,7.7 L1.5,7.6 L1.0,6.9 L0.6,6.6 L0.2,6.6 L-0.2,6.6 L-0.6,6.9 L-1.1,7.6 L-1.6,7.8 L-2.0,7.7 L-2.5,7.6 L-2.8,7.2 L-2.9,6.3 L-3.1,5.8 L-3.4,5.7 L-3.7,5.4 L-4.2,5.5 L-5.0,5.8 L-5.6,5.7 L-5.9,5.4 L-6.2,5.1 L-6.2,4.5 L-5.8,3.7 L-5.7,3.2 L-5.9,2.9 L-6.1,2.6 L-6.5,2.3 L-7.4,2.2 L-7.8,1.8 L-7.9,1.4 L-7.9,0.9 L-7.7,0.4 L-6.9,0.0 L-6.6,-0.4 L-6.6,-0.8 L-6.5,-1.1 L-6.7,-1.6 L-7.4,-2.2 L-7.5,-2.7 L-7.4,-3.1 L-7.2,-3.5 L-6.7,-3.8 L-5.8,-3.7 L-5.3,-3.9 L-5.1,-4.2 L-4.9,-4.5 L-4.8,-4.9 L-5.0,-5.8 L-4.9,-6.3 L-4.5,-6.6 L-4.1,-6.9 L-3.6,-6.8 L-2.9,-6.3 L-2.4,-6.2 L-2.0,-6.3 L-1.7,-6.4 L-1.4,-6.8 L-1.1,-7.6 L-0.7,-8.0 L-0.2,-8.0 L0.2,-8.0 L0.7,-7.7 L1.0,-6.9 L1.3,-6.5 L1.7,-6.4 L2.0,-6.3 L2.5,-6.4 L3.2,-7.0 L3.7,-7.1 L4.1,-6.9 L4.5,-6.6 L4.7,-6.1 L4.5,-5.2 L4.6,-4.7 L4.9,-4.5 L5.1,-4.2 L5.6,-4.1 L6.5,-4.1 L7.0,-3.9 L7.2,-3.5 L7.4,-3.1 L7.3,-2.6 L6.6,-2.0 L6.4,-1.5 L6.5,-1.1 L6.6,-0.8 L6.9,-0.4Z M-3.60,0.00 a3.60,4.20 0 1,0 7.20,0 a3.60,4.20 0 1,0 -7.20,0Z" fill="url(#gs)" fill-rule="evenodd" stroke="#8e8eae" stroke-width="0.8"/></g><g transform="translate(6,10.8) rotate(-15) scale(0.6,0.7)"><path d="M7.7,0.0 L8.0,0.5 L7.9,0.9 L7.9,1.4 L7.5,1.7 L6.6,2.0 L6.2,2.2 L6.1,2.6 L5.9,2.9 L6.0,3.4 L6.5,4.1 L6.5,4.7 L6.2,5.1 L5.9,5.4 L5.4,5.5 L4.5,5.2 L4.0,5.2 L3.7,5.4 L3.4,5.7 L3.2,6.1 L3.2,7.0 L2.9,7.5 L2.5,7.6 L2.0,7.7 L1.5,7.6 L1.0,6.9 L0.6,6.6 L0.2,6.6 L-0.2,6.6 L-0.6,6.9 L-1.1,7.6 L-1.6,7.8 L-2.0,7.7 L-2.5,7.6 L-2.8,7.2 L-2.9,6.3 L-3.1,5.8 L-3.4,5.7 L-3.7,5.4 L-4.2,5.5 L-5.0,5.8 L-5.6,5.7 L-5.9,5.4 L-6.2,5.1 L-6.2,4.5 L-5.8,3.7 L-5.7,3.2 L-5.9,2.9 L-6.1,2.6 L-6.5,2.3 L-7.4,2.2 L-7.8,1.8 L-7.9,1.4 L-7.9,0.9 L-7.7,0.4 L-6.9,0.0 L-6.6,-0.4 L-6.6,-0.8 L-6.5,-1.1 L-6.7,-1.6 L-7.4,-2.2 L-7.5,-2.7 L-7.4,-3.1 L-7.2,-3.5 L-6.7,-3.8 L-5.8,-3.7 L-5.3,-3.9 L-5.1,-4.2 L-4.9,-4.5 L-4.8,-4.9 L-5.0,-5.8 L-4.9,-6.3 L-4.5,-6.6 L-4.1,-6.9 L-3.6,-6.8 L-2.9,-6.3 L-2.4,-6.2 L-2.0,-6.3 L-1.7,-6.4 L-1.4,-6.8 L-1.1,-7.6 L-0.7,-8.0 L-0.2,-8.0 L0.2,-8.0 L0.7,-7.7 L1.0,-6.9 L1.3,-6.5 L1.7,-6.4 L2.0,-6.3 L2.5,-6.4 L3.2,-7.0 L3.7,-7.1 L4.1,-6.9 L4.5,-6.6 L4.7,-6.1 L4.5,-5.2 L4.6,-4.7 L4.9,-4.5 L5.1,-4.2 L5.6,-4.1 L6.5,-4.1 L7.0,-3.9 L7.2,-3.5 L7.4,-3.1 L7.3,-2.6 L6.6,-2.0 L6.4,-1.5 L6.5,-1.1 L6.6,-0.8 L6.9,-0.4Z M-3.60,0.00 a3.60,4.20 0 1,0 7.20,0 a3.60,4.20 0 1,0 -7.20,0Z" fill="url(#gs)" fill-rule="evenodd" stroke="#8e8eae" stroke-width="0.8"/></g><path d="M11,1.4 c-3,-0.2 -5,1 -5.8,3.6 l-1.4,-0.6 l1.8,4.6 l3.6,-3 l-1.6,-0.4 c0.4,-2 1.4,-3.4 3.4,-4.2 z" fill="#50cc38"/></svg><svg class="ic" style="left:119px;top:578px" width="17" height="17" viewBox="0 0 17 17"><g transform="translate(11,6.2) rotate(-15) scale(0.6,0.7)"><path d="M7.7,0.0 L8.0,0.5 L7.9,0.9 L7.9,1.4 L7.5,1.7 L6.6,2.0 L6.2,2.2 L6.1,2.6 L5.9,2.9 L6.0,3.4 L6.5,4.1 L6.5,4.7 L6.2,5.1 L5.9,5.4 L5.4,5.5 L4.5,5.2 L4.0,5.2 L3.7,5.4 L3.4,5.7 L3.2,6.1 L3.2,7.0 L2.9,7.5 L2.5,7.6 L2.0,7.7 L1.5,7.6 L1.0,6.9 L0.6,6.6 L0.2,6.6 L-0.2,6.6 L-0.6,6.9 L-1.1,7.6 L-1.6,7.8 L-2.0,7.7 L-2.5,7.6 L-2.8,7.2 L-2.9,6.3 L-3.1,5.8 L-3.4,5.7 L-3.7,5.4 L-4.2,5.5 L-5.0,5.8 L-5.6,5.7 L-5.9,5.4 L-6.2,5.1 L-6.2,4.5 L-5.8,3.7 L-5.7,3.2 L-5.9,2.9 L-6.1,2.6 L-6.5,2.3 L-7.4,2.2 L-7.8,1.8 L-7.9,1.4 L-7.9,0.9 L-7.7,0.4 L-6.9,0.0 L-6.6,-0.4 L-6.6,-0.8 L-6.5,-1.1 L-6.7,-1.6 L-7.4,-2.2 L-7.5,-2.7 L-7.4,-3.1 L-7.2,-3.5 L-6.7,-3.8 L-5.8,-3.7 L-5.3,-3.9 L-5.1,-4.2 L-4.9,-4.5 L-4.8,-4.9 L-5.0,-5.8 L-4.9,-6.3 L-4.5,-6.6 L-4.1,-6.9 L-3.6,-6.8 L-2.9,-6.3 L-2.4,-6.2 L-2.0,-6.3 L-1.7,-6.4 L-1.4,-6.8 L-1.1,-7.6 L-0.7,-8.0 L-0.2,-8.0 L0.2,-8.0 L0.7,-7.7 L1.0,-6.9 L1.3,-6.5 L1.7,-6.4 L2.0,-6.3 L2.5,-6.4 L3.2,-7.0 L3.7,-7.1 L4.1,-6.9 L4.5,-6.6 L4.7,-6.1 L4.5,-5.2 L4.6,-4.7 L4.9,-4.5 L5.1,-4.2 L5.6,-4.1 L6.5,-4.1 L7.0,-3.9 L7.2,-3.5 L7.4,-3.1 L7.3,-2.6 L6.6,-2.0 L6.4,-1.5 L6.5,-1.1 L6.6,-0.8 L6.9,-0.4Z M-3.60,0.00 a3.60,4.20 0 1,0 7.20,0 a3.60,4.20 0 1,0 -7.20,0Z" fill="url(#gs)" fill-rule="evenodd" stroke="#8e8eae" stroke-width="0.8"/></g><g transform="translate(6,10.8) rotate(-15) scale(0.6,0.7)"><path d="M7.7,0.0 L8.0,0.5 L7.9,0.9 L7.9,1.4 L7.5,1.7 L6.6,2.0 L6.2,2.2 L6.1,2.6 L5.9,2.9 L6.0,3.4 L6.5,4.1 L6.5,4.7 L6.2,5.1 L5.9,5.4 L5.4,5.5 L4.5,5.2 L4.0,5.2 L3.7,5.4 L3.4,5.7 L3.2,6.1 L3.2,7.0 L2.9,7.5 L2.5,7.6 L2.0,7.7 L1.5,7.6 L1.0,6.9 L0.6,6.6 L0.2,6.6 L-0.2,6.6 L-0.6,6.9 L-1.1,7.6 L-1.6,7.8 L-2.0,7.7 L-2.5,7.6 L-2.8,7.2 L-2.9,6.3 L-3.1,5.8 L-3.4,5.7 L-3.7,5.4 L-4.2,5.5 L-5.0,5.8 L-5.6,5.7 L-5.9,5.4 L-6.2,5.1 L-6.2,4.5 L-5.8,3.7 L-5.7,3.2 L-5.9,2.9 L-6.1,2.6 L-6.5,2.3 L-7.4,2.2 L-7.8,1.8 L-7.9,1.4 L-7.9,0.9 L-7.7,0.4 L-6.9,0.0 L-6.6,-0.4 L-6.6,-0.8 L-6.5,-1.1 L-6.7,-1.6 L-7.4,-2.2 L-7.5,-2.7 L-7.4,-3.1 L-7.2,-3.5 L-6.7,-3.8 L-5.8,-3.7 L-5.3,-3.9 L-5.1,-4.2 L-4.9,-4.5 L-4.8,-4.9 L-5.0,-5.8 L-4.9,-6.3 L-4.5,-6.6 L-4.1,-6.9 L-3.6,-6.8 L-2.9,-6.3 L-2.4,-6.2 L-2.0,-6.3 L-1.7,-6.4 L-1.4,-6.8 L-1.1,-7.6 L-0.7,-8.0 L-0.2,-8.0 L0.2,-8.0 L0.7,-7.7 L1.0,-6.9 L1.3,-6.5 L1.7,-6.4 L2.0,-6.3 L2.5,-6.4 L3.2,-7.0 L3.7,-7.1 L4.1,-6.9 L4.5,-6.6 L4.7,-6.1 L4.5,-5.2 L4.6,-4.7 L4.9,-4.5 L5.1,-4.2 L5.6,-4.1 L6.5,-4.1 L7.0,-3.9 L7.2,-3.5 L7.4,-3.1 L7.3,-2.6 L6.6,-2.0 L6.4,-1.5 L6.5,-1.1 L6.6,-0.8 L6.9,-0.4Z M-3.60,0.00 a3.60,4.20 0 1,0 7.20,0 a3.60,4.20 0 1,0 -7.20,0Z" fill="url(#gs)" fill-rule="evenodd" stroke="#8e8eae" stroke-width="0.8"/></g><path d="M11,1.4 c-3,-0.2 -5,1 -5.8,3.6 l-1.4,-0.6 l1.8,4.6 l3.6,-3 l-1.6,-0.4 c0.4,-2 1.4,-3.4 3.4,-4.2 z" fill="#50cc38"/><path d="M2.6,7 L0.4,9.6 L1.6,9.6 C1.6,13 3,14.6 6.6,14.6 L6.6,16 L9.6,13.6 L6.6,11.4 L6.6,12.8 C4.2,12.8 3.4,12 3.4,9.6 L4.6,9.6 Z" fill="#d83020"/></svg><svg class="ic" style="left:119px;top:626px" width="17" height="17" viewBox="0 0 17 17"><g transform="translate(8.4,8) rotate(-15) scale(0.88,1)"><path d="M7.7,0.0 L8.0,0.5 L7.9,0.9 L7.9,1.4 L7.5,1.7 L6.6,2.0 L6.2,2.2 L6.1,2.6 L5.9,2.9 L6.0,3.4 L6.5,4.1 L6.5,4.7 L6.2,5.1 L5.9,5.4 L5.4,5.5 L4.5,5.2 L4.0,5.2 L3.7,5.4 L3.4,5.7 L3.2,6.1 L3.2,7.0 L2.9,7.5 L2.5,7.6 L2.0,7.7 L1.5,7.6 L1.0,6.9 L0.6,6.6 L0.2,6.6 L-0.2,6.6 L-0.6,6.9 L-1.1,7.6 L-1.6,7.8 L-2.0,7.7 L-2.5,7.6 L-2.8,7.2 L-2.9,6.3 L-3.1,5.8 L-3.4,5.7 L-3.7,5.4 L-4.2,5.5 L-5.0,5.8 L-5.6,5.7 L-5.9,5.4 L-6.2,5.1 L-6.2,4.5 L-5.8,3.7 L-5.7,3.2 L-5.9,2.9 L-6.1,2.6 L-6.5,2.3 L-7.4,2.2 L-7.8,1.8 L-7.9,1.4 L-7.9,0.9 L-7.7,0.4 L-6.9,0.0 L-6.6,-0.4 L-6.6,-0.8 L-6.5,-1.1 L-6.7,-1.6 L-7.4,-2.2 L-7.5,-2.7 L-7.4,-3.1 L-7.2,-3.5 L-6.7,-3.8 L-5.8,-3.7 L-5.3,-3.9 L-5.1,-4.2 L-4.9,-4.5 L-4.8,-4.9 L-5.0,-5.8 L-4.9,-6.3 L-4.5,-6.6 L-4.1,-6.9 L-3.6,-6.8 L-2.9,-6.3 L-2.4,-6.2 L-2.0,-6.3 L-1.7,-6.4 L-1.4,-6.8 L-1.1,-7.6 L-0.7,-8.0 L-0.2,-8.0 L0.2,-8.0 L0.7,-7.7 L1.0,-6.9 L1.3,-6.5 L1.7,-6.4 L2.0,-6.3 L2.5,-6.4 L3.2,-7.0 L3.7,-7.1 L4.1,-6.9 L4.5,-6.6 L4.7,-6.1 L4.5,-5.2 L4.6,-4.7 L4.9,-4.5 L5.1,-4.2 L5.6,-4.1 L6.5,-4.1 L7.0,-3.9 L7.2,-3.5 L7.4,-3.1 L7.3,-2.6 L6.6,-2.0 L6.4,-1.5 L6.5,-1.1 L6.6,-0.8 L6.9,-0.4Z M-3.60,0.00 a3.60,4.20 0 1,0 7.20,0 a3.60,4.20 0 1,0 -7.20,0Z" fill="url(#gs)" fill-rule="evenodd" stroke="#8e8eae" stroke-width="0.5"/></g><text x="10.8" y="15.2" font-family="Liberation Serif,serif" font-weight="bold" font-size="8" fill="#000">&#931;</text></svg><svg class="ic" style="left:119px;top:650px" width="17" height="17" viewBox="0 0 17 17"><g transform="translate(8.4,8) rotate(-15) scale(0.88,1)"><path d="M7.7,0.0 L8.0,0.5 L7.9,0.9 L7.9,1.4 L7.5,1.7 L6.6,2.0 L6.2,2.2 L6.1,2.6 L5.9,2.9 L6.0,3.4 L6.5,4.1 L6.5,4.7 L6.2,5.1 L5.9,5.4 L5.4,5.5 L4.5,5.2 L4.0,5.2 L3.7,5.4 L3.4,5.7 L3.2,6.1 L3.2,7.0 L2.9,7.5 L2.5,7.6 L2.0,7.7 L1.5,7.6 L1.0,6.9 L0.6,6.6 L0.2,6.6 L-0.2,6.6 L-0.6,6.9 L-1.1,7.6 L-1.6,7.8 L-2.0,7.7 L-2.5,7.6 L-2.8,7.2 L-2.9,6.3 L-3.1,5.8 L-3.4,5.7 L-3.7,5.4 L-4.2,5.5 L-5.0,5.8 L-5.6,5.7 L-5.9,5.4 L-6.2,5.1 L-6.2,4.5 L-5.8,3.7 L-5.7,3.2 L-5.9,2.9 L-6.1,2.6 L-6.5,2.3 L-7.4,2.2 L-7.8,1.8 L-7.9,1.4 L-7.9,0.9 L-7.7,0.4 L-6.9,0.0 L-6.6,-0.4 L-6.6,-0.8 L-6.5,-1.1 L-6.7,-1.6 L-7.4,-2.2 L-7.5,-2.7 L-7.4,-3.1 L-7.2,-3.5 L-6.7,-3.8 L-5.8,-3.7 L-5.3,-3.9 L-5.1,-4.2 L-4.9,-4.5 L-4.8,-4.9 L-5.0,-5.8 L-4.9,-6.3 L-4.5,-6.6 L-4.1,-6.9 L-3.6,-6.8 L-2.9,-6.3 L-2.4,-6.2 L-2.0,-6.3 L-1.7,-6.4 L-1.4,-6.8 L-1.1,-7.6 L-0.7,-8.0 L-0.2,-8.0 L0.2,-8.0 L0.7,-7.7 L1.0,-6.9 L1.3,-6.5 L1.7,-6.4 L2.0,-6.3 L2.5,-6.4 L3.2,-7.0 L3.7,-7.1 L4.1,-6.9 L4.5,-6.6 L4.7,-6.1 L4.5,-5.2 L4.6,-4.7 L4.9,-4.5 L5.1,-4.2 L5.6,-4.1 L6.5,-4.1 L7.0,-3.9 L7.2,-3.5 L7.4,-3.1 L7.3,-2.6 L6.6,-2.0 L6.4,-1.5 L6.5,-1.1 L6.6,-0.8 L6.9,-0.4Z M-3.60,0.00 a3.60,4.20 0 1,0 7.20,0 a3.60,4.20 0 1,0 -7.20,0Z" fill="url(#gs)" fill-rule="evenodd" stroke="#8e8eae" stroke-width="0.5"/></g></svg>
<span class="t" style="left:147.4px;top:192px;font-size:12px;color:#000;letter-spacing:-0.284px;font-weight:bold;">General</span>
<span class="t" style="left:147.4px;top:216px;font-size:12px;color:#1a1a1a;letter-spacing:-0.171px;">Edit article master...</span>
<span class="t" style="left:147.4px;top:240px;font-size:12px;color:#1a1a1a;letter-spacing:-0.216px;">Preselect article</span>
<span class="t" style="left:147.4px;top:266px;font-size:12px;color:#1a1a1a;letter-spacing:-0.108px;">Edit Workflow status...</span>
<span class="t" style="left:147.4px;top:290px;font-size:12px;color:#1a1a1a;letter-spacing:-0.298px;">Assign roles...</span>
<span class="t" style="left:147.4px;top:316px;font-size:12px;color:#1a1a1a;letter-spacing:-0.129px;">Edit attribute values...</span>
<span class="t" style="left:147.4px;top:340px;font-size:12px;color:#000;letter-spacing:-0.359px;font-weight:bold;">Assignments</span>
<span class="t" style="left:147.4px;top:364px;font-size:12px;color:#1a1a1a;letter-spacing:-0.270px;">Classification...</span>
<span class="t" style="left:147.4px;top:388px;font-size:12px;color:#1a1a1a;letter-spacing:-0.190px;">Assignments</span>
<span class="t" style="left:147.4px;top:412px;font-size:12px;color:#1a1a1a;letter-spacing:-0.110px;">Where-used lists</span>
<span class="t" style="left:147.4px;top:436px;font-size:12px;color:#1a1a1a;letter-spacing:-0.383px;">Links</span>
<span class="t" style="left:147.4px;top:460px;font-size:12px;color:#000;letter-spacing:0.156px;font-weight:bold;">Input</span>
<span class="t" style="left:147.4px;top:484px;font-size:12px;color:#1a1a1a;letter-spacing:-0.296px;">Create index...</span>
<span class="t" style="left:147.4px;top:508px;font-size:12px;color:#1a1a1a;letter-spacing:-0.146px;">Create index, with link...</span>
<span class="t" style="left:147.4px;top:532px;font-size:12px;color:#1a1a1a;letter-spacing:-0.187px;">Create drawing index...</span>
<span class="t" style="left:147.4px;top:558px;font-size:12px;color:#1a1a1a;letter-spacing:-0.189px;">Create derivation...</span>
<span class="t" style="left:147.4px;top:582px;font-size:12px;color:#1a1a1a;letter-spacing:-0.085px;">Create derivation, with link...</span>
<span class="t" style="left:147.4px;top:606px;font-size:12px;color:#000;letter-spacing:0.131px;font-weight:bold;">Output</span>
<span class="t" style="left:147.4px;top:630px;font-size:12px;color:#1a1a1a;letter-spacing:-0.141px;">Show Version Management...</span>
<div id="redrect"></div>

</body></html>
